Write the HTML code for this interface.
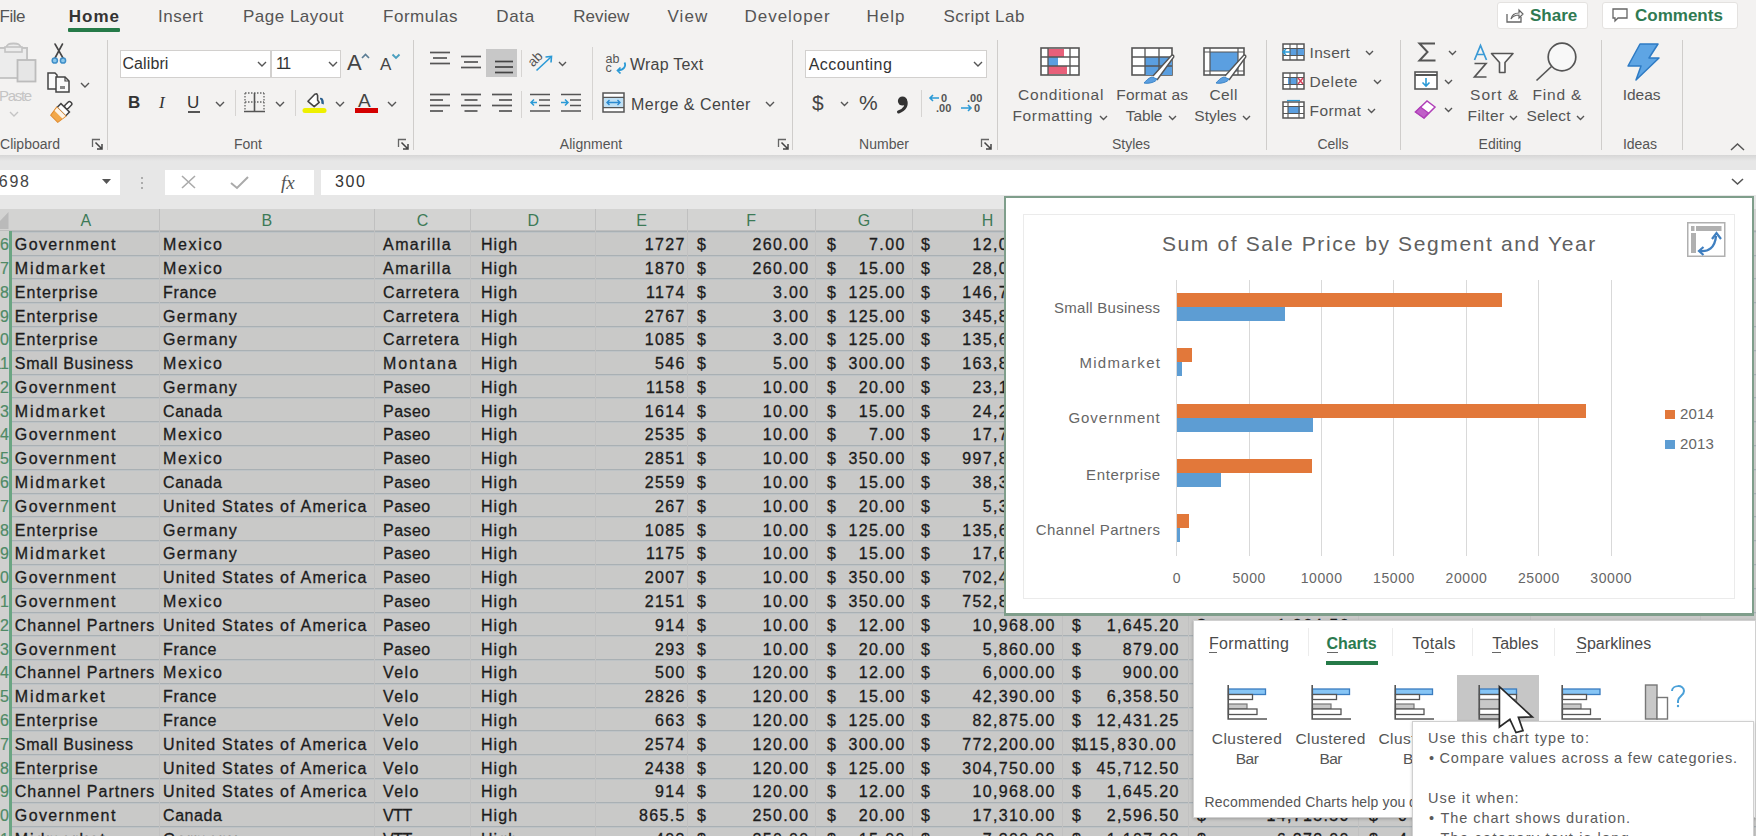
<!DOCTYPE html><html><head><meta charset="utf-8"><style>

*{box-sizing:border-box}
html,body{margin:0;padding:0}
body{width:1756px;height:836px;overflow:hidden;position:relative;background:#c9c9c8;font-family:"Liberation Sans",sans-serif;color:#222}
.a{position:absolute;white-space:nowrap}
.t{position:absolute;white-space:nowrap;line-height:1}
svg{position:absolute;overflow:visible}

</style></head><body>
<div class="a" style="left:0;top:209px;width:1756px;height:627px;background:#c9c9c8"></div>
<div class="a" style="left:0;top:209px;width:1756px;height:22px;background:#d3d3d2;border-bottom:1px solid #bdbdbd"></div>
<svg style="left:0;top:209px" width="10" height="22"><path d="M8.5 3 L8.5 20 L0 20 L0 12 Z" fill="#bababa"/></svg>
<div class="a" style="left:159.0px;top:209px;width:1px;height:22px;background:#c0c0c0"></div>
<div class="t" style="left:12.0px;width:147.5px;top:213px;text-align:center;font-size:16px;color:#3d7a57">A</div>
<div class="a" style="left:373.9px;top:209px;width:1px;height:22px;background:#c0c0c0"></div>
<div class="t" style="left:159.5px;width:214.9px;top:213px;text-align:center;font-size:16px;color:#3d7a57">B</div>
<div class="a" style="left:470.2px;top:209px;width:1px;height:22px;background:#c0c0c0"></div>
<div class="t" style="left:374.4px;width:96.3px;top:213px;text-align:center;font-size:16px;color:#3d7a57">C</div>
<div class="a" style="left:595.3px;top:209px;width:1px;height:22px;background:#c0c0c0"></div>
<div class="t" style="left:470.7px;width:125.1px;top:213px;text-align:center;font-size:16px;color:#3d7a57">D</div>
<div class="a" style="left:686.7px;top:209px;width:1px;height:22px;background:#c0c0c0"></div>
<div class="t" style="left:595.8px;width:91.4px;top:213px;text-align:center;font-size:16px;color:#3d7a57">E</div>
<div class="a" style="left:814.8px;top:209px;width:1px;height:22px;background:#c0c0c0"></div>
<div class="t" style="left:687.2px;width:128.1px;top:213px;text-align:center;font-size:16px;color:#3d7a57">F</div>
<div class="a" style="left:912.2px;top:209px;width:1px;height:22px;background:#c0c0c0"></div>
<div class="t" style="left:815.3px;width:97.4px;top:213px;text-align:center;font-size:16px;color:#3d7a57">G</div>
<div class="a" style="left:1062.0px;top:209px;width:1px;height:22px;background:#c0c0c0"></div>
<div class="t" style="left:912.7px;width:149.8px;top:213px;text-align:center;font-size:16px;color:#3d7a57">H</div>
<div class="a" style="left:1187.9px;top:209px;width:1px;height:22px;background:#c0c0c0"></div>
<div class="t" style="left:1062.5px;width:125.9px;top:213px;text-align:center;font-size:16px;color:#3d7a57">I</div>
<div class="a" style="left:1357.5px;top:209px;width:1px;height:22px;background:#c0c0c0"></div>
<div class="t" style="left:1188.4px;width:169.6px;top:213px;text-align:center;font-size:16px;color:#3d7a57">J</div>
<div class="a" style="left:1529.5px;top:209px;width:1px;height:22px;background:#c0c0c0"></div>
<div class="t" style="left:1358.0px;width:172.0px;top:213px;text-align:center;font-size:16px;color:#3d7a57">K</div>
<div class="a" style="left:1699.5px;top:209px;width:1px;height:22px;background:#c0c0c0"></div>
<div class="t" style="left:1530.0px;width:170.0px;top:213px;text-align:center;font-size:16px;color:#3d7a57">L</div>
<div class="a" style="left:12px;top:230.90px;width:1744px;height:1px;background:#a9b0b4"></div>
<div class="a" style="left:12px;top:231.90px;width:1744px;height:1px;background:#bec3c6"></div>
<div class="a" style="left:12px;top:254.69px;width:1744px;height:1px;background:#a9b0b4"></div>
<div class="a" style="left:12px;top:255.69px;width:1744px;height:1px;background:#bec3c6"></div>
<div class="a" style="left:12px;top:278.48px;width:1744px;height:1px;background:#a9b0b4"></div>
<div class="a" style="left:12px;top:279.48px;width:1744px;height:1px;background:#bec3c6"></div>
<div class="a" style="left:12px;top:302.27px;width:1744px;height:1px;background:#a9b0b4"></div>
<div class="a" style="left:12px;top:303.27px;width:1744px;height:1px;background:#bec3c6"></div>
<div class="a" style="left:12px;top:326.06px;width:1744px;height:1px;background:#a9b0b4"></div>
<div class="a" style="left:12px;top:327.06px;width:1744px;height:1px;background:#bec3c6"></div>
<div class="a" style="left:12px;top:349.85px;width:1744px;height:1px;background:#a9b0b4"></div>
<div class="a" style="left:12px;top:350.85px;width:1744px;height:1px;background:#bec3c6"></div>
<div class="a" style="left:12px;top:373.64px;width:1744px;height:1px;background:#a9b0b4"></div>
<div class="a" style="left:12px;top:374.64px;width:1744px;height:1px;background:#bec3c6"></div>
<div class="a" style="left:12px;top:397.43px;width:1744px;height:1px;background:#a9b0b4"></div>
<div class="a" style="left:12px;top:398.43px;width:1744px;height:1px;background:#bec3c6"></div>
<div class="a" style="left:12px;top:421.22px;width:1744px;height:1px;background:#a9b0b4"></div>
<div class="a" style="left:12px;top:422.22px;width:1744px;height:1px;background:#bec3c6"></div>
<div class="a" style="left:12px;top:445.01px;width:1744px;height:1px;background:#a9b0b4"></div>
<div class="a" style="left:12px;top:446.01px;width:1744px;height:1px;background:#bec3c6"></div>
<div class="a" style="left:12px;top:468.80px;width:1744px;height:1px;background:#a9b0b4"></div>
<div class="a" style="left:12px;top:469.80px;width:1744px;height:1px;background:#bec3c6"></div>
<div class="a" style="left:12px;top:492.59px;width:1744px;height:1px;background:#a9b0b4"></div>
<div class="a" style="left:12px;top:493.59px;width:1744px;height:1px;background:#bec3c6"></div>
<div class="a" style="left:12px;top:516.38px;width:1744px;height:1px;background:#a9b0b4"></div>
<div class="a" style="left:12px;top:517.38px;width:1744px;height:1px;background:#bec3c6"></div>
<div class="a" style="left:12px;top:540.17px;width:1744px;height:1px;background:#a9b0b4"></div>
<div class="a" style="left:12px;top:541.17px;width:1744px;height:1px;background:#bec3c6"></div>
<div class="a" style="left:12px;top:563.96px;width:1744px;height:1px;background:#a9b0b4"></div>
<div class="a" style="left:12px;top:564.96px;width:1744px;height:1px;background:#bec3c6"></div>
<div class="a" style="left:12px;top:587.75px;width:1744px;height:1px;background:#a9b0b4"></div>
<div class="a" style="left:12px;top:588.75px;width:1744px;height:1px;background:#bec3c6"></div>
<div class="a" style="left:12px;top:611.54px;width:1744px;height:1px;background:#a9b0b4"></div>
<div class="a" style="left:12px;top:612.54px;width:1744px;height:1px;background:#bec3c6"></div>
<div class="a" style="left:12px;top:635.33px;width:1744px;height:1px;background:#a9b0b4"></div>
<div class="a" style="left:12px;top:636.33px;width:1744px;height:1px;background:#bec3c6"></div>
<div class="a" style="left:12px;top:659.12px;width:1744px;height:1px;background:#a9b0b4"></div>
<div class="a" style="left:12px;top:660.12px;width:1744px;height:1px;background:#bec3c6"></div>
<div class="a" style="left:12px;top:682.91px;width:1744px;height:1px;background:#a9b0b4"></div>
<div class="a" style="left:12px;top:683.91px;width:1744px;height:1px;background:#bec3c6"></div>
<div class="a" style="left:12px;top:706.70px;width:1744px;height:1px;background:#a9b0b4"></div>
<div class="a" style="left:12px;top:707.70px;width:1744px;height:1px;background:#bec3c6"></div>
<div class="a" style="left:12px;top:730.49px;width:1744px;height:1px;background:#a9b0b4"></div>
<div class="a" style="left:12px;top:731.49px;width:1744px;height:1px;background:#bec3c6"></div>
<div class="a" style="left:12px;top:754.28px;width:1744px;height:1px;background:#a9b0b4"></div>
<div class="a" style="left:12px;top:755.28px;width:1744px;height:1px;background:#bec3c6"></div>
<div class="a" style="left:12px;top:778.07px;width:1744px;height:1px;background:#a9b0b4"></div>
<div class="a" style="left:12px;top:779.07px;width:1744px;height:1px;background:#bec3c6"></div>
<div class="a" style="left:12px;top:801.86px;width:1744px;height:1px;background:#a9b0b4"></div>
<div class="a" style="left:12px;top:802.86px;width:1744px;height:1px;background:#bec3c6"></div>
<div class="a" style="left:12px;top:825.65px;width:1744px;height:1px;background:#a9b0b4"></div>
<div class="a" style="left:12px;top:826.65px;width:1744px;height:1px;background:#bec3c6"></div>
<div class="a" style="left:12px;top:849.44px;width:1744px;height:1px;background:#a9b0b4"></div>
<div class="a" style="left:12px;top:850.44px;width:1744px;height:1px;background:#bec3c6"></div>
<div class="a" style="left:159.0px;top:231px;width:1px;height:605px;background:#c1c1c1"></div>
<div class="a" style="left:373.9px;top:231px;width:1px;height:605px;background:#c1c1c1"></div>
<div class="a" style="left:470.2px;top:231px;width:1px;height:605px;background:#c1c1c1"></div>
<div class="a" style="left:595.3px;top:231px;width:1px;height:605px;background:#c1c1c1"></div>
<div class="a" style="left:686.7px;top:231px;width:1px;height:605px;background:#c1c1c1"></div>
<div class="a" style="left:814.8px;top:231px;width:1px;height:605px;background:#c1c1c1"></div>
<div class="a" style="left:912.2px;top:231px;width:1px;height:605px;background:#c1c1c1"></div>
<div class="a" style="left:1062.0px;top:231px;width:1px;height:605px;background:#c1c1c1"></div>
<div class="a" style="left:1187.9px;top:231px;width:1px;height:605px;background:#c1c1c1"></div>
<div class="a" style="left:1357.5px;top:231px;width:1px;height:605px;background:#c1c1c1"></div>
<div class="a" style="left:1529.5px;top:231px;width:1px;height:605px;background:#c1c1c1"></div>
<div class="a" style="left:1699.5px;top:231px;width:1px;height:605px;background:#c1c1c1"></div>
<div class="a" style="left:0;top:231px;width:10px;height:605px;background:#d0d0cf"></div>
<div class="a" style="left:9px;top:231px;width:3px;height:605px;background:#6aa582"></div>
<div class="t" style="right:1747px;top:237.16px;font-size:16px;color:#4f8a66;-webkit-text-stroke:0.2px #4f8a66">6</div>
<div class="t" style="left:14.8px;top:237.16px;font-size:16px;color:#1c1c1c;letter-spacing:1.39px;-webkit-text-stroke:0.3px #1c1c1c">Government</div>
<div class="t" style="left:163.1px;top:237.16px;font-size:16px;color:#1c1c1c;letter-spacing:1.63px;-webkit-text-stroke:0.3px #1c1c1c">Mexico</div>
<div class="t" style="left:383.1px;top:237.16px;font-size:16px;color:#1c1c1c;letter-spacing:1.39px;-webkit-text-stroke:0.3px #1c1c1c">Amarilla</div>
<div class="t" style="left:480.9px;top:237.16px;font-size:16px;color:#1c1c1c;letter-spacing:1.13px;-webkit-text-stroke:0.3px #1c1c1c">High</div>
<div class="t" style="right:1070.15px;top:237.16px;font-size:16px;letter-spacing:1.35px;color:#1c1c1c;-webkit-text-stroke:0.3px #1c1c1c">1727</div>
<div class="t" style="left:697px;top:237.16px;font-size:16px;color:#1c1c1c;-webkit-text-stroke:0.3px #1c1c1c">$</div>
<div class="t" style="right:946.55px;top:237.16px;font-size:16px;letter-spacing:1.35px;color:#1c1c1c;-webkit-text-stroke:0.3px #1c1c1c">260.00</div>
<div class="t" style="left:827px;top:237.16px;font-size:16px;color:#1c1c1c;-webkit-text-stroke:0.3px #1c1c1c">$</div>
<div class="t" style="right:850.35px;top:237.16px;font-size:16px;letter-spacing:1.35px;color:#1c1c1c;-webkit-text-stroke:0.3px #1c1c1c">7.00</div>
<div class="t" style="left:921px;top:237.16px;font-size:16px;color:#1c1c1c;-webkit-text-stroke:0.3px #1c1c1c">$</div>
<div class="t" style="right:700.15px;top:237.16px;font-size:16px;letter-spacing:1.35px;color:#1c1c1c;-webkit-text-stroke:0.3px #1c1c1c">12,089.00</div>
<div class="t" style="right:1747px;top:260.95px;font-size:16px;color:#4f8a66;-webkit-text-stroke:0.2px #4f8a66">7</div>
<div class="t" style="left:14.8px;top:260.95px;font-size:16px;color:#1c1c1c;letter-spacing:1.91px;-webkit-text-stroke:0.3px #1c1c1c">Midmarket</div>
<div class="t" style="left:163.1px;top:260.95px;font-size:16px;color:#1c1c1c;letter-spacing:1.63px;-webkit-text-stroke:0.3px #1c1c1c">Mexico</div>
<div class="t" style="left:383.1px;top:260.95px;font-size:16px;color:#1c1c1c;letter-spacing:1.39px;-webkit-text-stroke:0.3px #1c1c1c">Amarilla</div>
<div class="t" style="left:480.9px;top:260.95px;font-size:16px;color:#1c1c1c;letter-spacing:1.13px;-webkit-text-stroke:0.3px #1c1c1c">High</div>
<div class="t" style="right:1070.15px;top:260.95px;font-size:16px;letter-spacing:1.35px;color:#1c1c1c;-webkit-text-stroke:0.3px #1c1c1c">1870</div>
<div class="t" style="left:697px;top:260.95px;font-size:16px;color:#1c1c1c;-webkit-text-stroke:0.3px #1c1c1c">$</div>
<div class="t" style="right:946.55px;top:260.95px;font-size:16px;letter-spacing:1.35px;color:#1c1c1c;-webkit-text-stroke:0.3px #1c1c1c">260.00</div>
<div class="t" style="left:827px;top:260.95px;font-size:16px;color:#1c1c1c;-webkit-text-stroke:0.3px #1c1c1c">$</div>
<div class="t" style="right:850.35px;top:260.95px;font-size:16px;letter-spacing:1.35px;color:#1c1c1c;-webkit-text-stroke:0.3px #1c1c1c">15.00</div>
<div class="t" style="left:921px;top:260.95px;font-size:16px;color:#1c1c1c;-webkit-text-stroke:0.3px #1c1c1c">$</div>
<div class="t" style="right:700.15px;top:260.95px;font-size:16px;letter-spacing:1.35px;color:#1c1c1c;-webkit-text-stroke:0.3px #1c1c1c">28,050.00</div>
<div class="t" style="right:1747px;top:284.74px;font-size:16px;color:#4f8a66;-webkit-text-stroke:0.2px #4f8a66">8</div>
<div class="t" style="left:14.8px;top:284.74px;font-size:16px;color:#1c1c1c;letter-spacing:1.10px;-webkit-text-stroke:0.3px #1c1c1c">Enterprise</div>
<div class="t" style="left:163.1px;top:284.74px;font-size:16px;color:#1c1c1c;letter-spacing:0.69px;-webkit-text-stroke:0.3px #1c1c1c">France</div>
<div class="t" style="left:383.1px;top:284.74px;font-size:16px;color:#1c1c1c;letter-spacing:1.03px;-webkit-text-stroke:0.3px #1c1c1c">Carretera</div>
<div class="t" style="left:480.9px;top:284.74px;font-size:16px;color:#1c1c1c;letter-spacing:1.13px;-webkit-text-stroke:0.3px #1c1c1c">High</div>
<div class="t" style="right:1070.15px;top:284.74px;font-size:16px;letter-spacing:1.35px;color:#1c1c1c;-webkit-text-stroke:0.3px #1c1c1c">1174</div>
<div class="t" style="left:697px;top:284.74px;font-size:16px;color:#1c1c1c;-webkit-text-stroke:0.3px #1c1c1c">$</div>
<div class="t" style="right:946.55px;top:284.74px;font-size:16px;letter-spacing:1.35px;color:#1c1c1c;-webkit-text-stroke:0.3px #1c1c1c">3.00</div>
<div class="t" style="left:827px;top:284.74px;font-size:16px;color:#1c1c1c;-webkit-text-stroke:0.3px #1c1c1c">$</div>
<div class="t" style="right:850.35px;top:284.74px;font-size:16px;letter-spacing:1.35px;color:#1c1c1c;-webkit-text-stroke:0.3px #1c1c1c">125.00</div>
<div class="t" style="left:921px;top:284.74px;font-size:16px;color:#1c1c1c;-webkit-text-stroke:0.3px #1c1c1c">$</div>
<div class="t" style="right:700.15px;top:284.74px;font-size:16px;letter-spacing:1.35px;color:#1c1c1c;-webkit-text-stroke:0.3px #1c1c1c">146,750.00</div>
<div class="t" style="right:1747px;top:308.53px;font-size:16px;color:#4f8a66;-webkit-text-stroke:0.2px #4f8a66">9</div>
<div class="t" style="left:14.8px;top:308.53px;font-size:16px;color:#1c1c1c;letter-spacing:1.10px;-webkit-text-stroke:0.3px #1c1c1c">Enterprise</div>
<div class="t" style="left:163.1px;top:308.53px;font-size:16px;color:#1c1c1c;letter-spacing:1.33px;-webkit-text-stroke:0.3px #1c1c1c">Germany</div>
<div class="t" style="left:383.1px;top:308.53px;font-size:16px;color:#1c1c1c;letter-spacing:1.03px;-webkit-text-stroke:0.3px #1c1c1c">Carretera</div>
<div class="t" style="left:480.9px;top:308.53px;font-size:16px;color:#1c1c1c;letter-spacing:1.13px;-webkit-text-stroke:0.3px #1c1c1c">High</div>
<div class="t" style="right:1070.15px;top:308.53px;font-size:16px;letter-spacing:1.35px;color:#1c1c1c;-webkit-text-stroke:0.3px #1c1c1c">2767</div>
<div class="t" style="left:697px;top:308.53px;font-size:16px;color:#1c1c1c;-webkit-text-stroke:0.3px #1c1c1c">$</div>
<div class="t" style="right:946.55px;top:308.53px;font-size:16px;letter-spacing:1.35px;color:#1c1c1c;-webkit-text-stroke:0.3px #1c1c1c">3.00</div>
<div class="t" style="left:827px;top:308.53px;font-size:16px;color:#1c1c1c;-webkit-text-stroke:0.3px #1c1c1c">$</div>
<div class="t" style="right:850.35px;top:308.53px;font-size:16px;letter-spacing:1.35px;color:#1c1c1c;-webkit-text-stroke:0.3px #1c1c1c">125.00</div>
<div class="t" style="left:921px;top:308.53px;font-size:16px;color:#1c1c1c;-webkit-text-stroke:0.3px #1c1c1c">$</div>
<div class="t" style="right:700.15px;top:308.53px;font-size:16px;letter-spacing:1.35px;color:#1c1c1c;-webkit-text-stroke:0.3px #1c1c1c">345,875.00</div>
<div class="t" style="right:1747px;top:332.32px;font-size:16px;color:#4f8a66;-webkit-text-stroke:0.2px #4f8a66">10</div>
<div class="t" style="left:14.8px;top:332.32px;font-size:16px;color:#1c1c1c;letter-spacing:1.10px;-webkit-text-stroke:0.3px #1c1c1c">Enterprise</div>
<div class="t" style="left:163.1px;top:332.32px;font-size:16px;color:#1c1c1c;letter-spacing:1.33px;-webkit-text-stroke:0.3px #1c1c1c">Germany</div>
<div class="t" style="left:383.1px;top:332.32px;font-size:16px;color:#1c1c1c;letter-spacing:1.03px;-webkit-text-stroke:0.3px #1c1c1c">Carretera</div>
<div class="t" style="left:480.9px;top:332.32px;font-size:16px;color:#1c1c1c;letter-spacing:1.13px;-webkit-text-stroke:0.3px #1c1c1c">High</div>
<div class="t" style="right:1070.15px;top:332.32px;font-size:16px;letter-spacing:1.35px;color:#1c1c1c;-webkit-text-stroke:0.3px #1c1c1c">1085</div>
<div class="t" style="left:697px;top:332.32px;font-size:16px;color:#1c1c1c;-webkit-text-stroke:0.3px #1c1c1c">$</div>
<div class="t" style="right:946.55px;top:332.32px;font-size:16px;letter-spacing:1.35px;color:#1c1c1c;-webkit-text-stroke:0.3px #1c1c1c">3.00</div>
<div class="t" style="left:827px;top:332.32px;font-size:16px;color:#1c1c1c;-webkit-text-stroke:0.3px #1c1c1c">$</div>
<div class="t" style="right:850.35px;top:332.32px;font-size:16px;letter-spacing:1.35px;color:#1c1c1c;-webkit-text-stroke:0.3px #1c1c1c">125.00</div>
<div class="t" style="left:921px;top:332.32px;font-size:16px;color:#1c1c1c;-webkit-text-stroke:0.3px #1c1c1c">$</div>
<div class="t" style="right:700.15px;top:332.32px;font-size:16px;letter-spacing:1.35px;color:#1c1c1c;-webkit-text-stroke:0.3px #1c1c1c">135,625.00</div>
<div class="t" style="right:1747px;top:356.11px;font-size:16px;color:#4f8a66;-webkit-text-stroke:0.2px #4f8a66">11</div>
<div class="t" style="left:14.8px;top:356.11px;font-size:16px;color:#1c1c1c;letter-spacing:0.67px;-webkit-text-stroke:0.3px #1c1c1c">Small Business</div>
<div class="t" style="left:163.1px;top:356.11px;font-size:16px;color:#1c1c1c;letter-spacing:1.63px;-webkit-text-stroke:0.3px #1c1c1c">Mexico</div>
<div class="t" style="left:383.1px;top:356.11px;font-size:16px;color:#1c1c1c;letter-spacing:1.88px;-webkit-text-stroke:0.3px #1c1c1c">Montana</div>
<div class="t" style="left:480.9px;top:356.11px;font-size:16px;color:#1c1c1c;letter-spacing:1.13px;-webkit-text-stroke:0.3px #1c1c1c">High</div>
<div class="t" style="right:1070.15px;top:356.11px;font-size:16px;letter-spacing:1.35px;color:#1c1c1c;-webkit-text-stroke:0.3px #1c1c1c">546</div>
<div class="t" style="left:697px;top:356.11px;font-size:16px;color:#1c1c1c;-webkit-text-stroke:0.3px #1c1c1c">$</div>
<div class="t" style="right:946.55px;top:356.11px;font-size:16px;letter-spacing:1.35px;color:#1c1c1c;-webkit-text-stroke:0.3px #1c1c1c">5.00</div>
<div class="t" style="left:827px;top:356.11px;font-size:16px;color:#1c1c1c;-webkit-text-stroke:0.3px #1c1c1c">$</div>
<div class="t" style="right:850.35px;top:356.11px;font-size:16px;letter-spacing:1.35px;color:#1c1c1c;-webkit-text-stroke:0.3px #1c1c1c">300.00</div>
<div class="t" style="left:921px;top:356.11px;font-size:16px;color:#1c1c1c;-webkit-text-stroke:0.3px #1c1c1c">$</div>
<div class="t" style="right:700.15px;top:356.11px;font-size:16px;letter-spacing:1.35px;color:#1c1c1c;-webkit-text-stroke:0.3px #1c1c1c">163,800.00</div>
<div class="t" style="right:1747px;top:379.90px;font-size:16px;color:#4f8a66;-webkit-text-stroke:0.2px #4f8a66">12</div>
<div class="t" style="left:14.8px;top:379.9px;font-size:16px;color:#1c1c1c;letter-spacing:1.39px;-webkit-text-stroke:0.3px #1c1c1c">Government</div>
<div class="t" style="left:163.1px;top:379.9px;font-size:16px;color:#1c1c1c;letter-spacing:1.33px;-webkit-text-stroke:0.3px #1c1c1c">Germany</div>
<div class="t" style="left:383.1px;top:379.9px;font-size:16px;color:#1c1c1c;letter-spacing:0.44px;-webkit-text-stroke:0.3px #1c1c1c">Paseo</div>
<div class="t" style="left:480.9px;top:379.9px;font-size:16px;color:#1c1c1c;letter-spacing:1.13px;-webkit-text-stroke:0.3px #1c1c1c">High</div>
<div class="t" style="right:1070.15px;top:379.90px;font-size:16px;letter-spacing:1.35px;color:#1c1c1c;-webkit-text-stroke:0.3px #1c1c1c">1158</div>
<div class="t" style="left:697px;top:379.90px;font-size:16px;color:#1c1c1c;-webkit-text-stroke:0.3px #1c1c1c">$</div>
<div class="t" style="right:946.55px;top:379.90px;font-size:16px;letter-spacing:1.35px;color:#1c1c1c;-webkit-text-stroke:0.3px #1c1c1c">10.00</div>
<div class="t" style="left:827px;top:379.90px;font-size:16px;color:#1c1c1c;-webkit-text-stroke:0.3px #1c1c1c">$</div>
<div class="t" style="right:850.35px;top:379.90px;font-size:16px;letter-spacing:1.35px;color:#1c1c1c;-webkit-text-stroke:0.3px #1c1c1c">20.00</div>
<div class="t" style="left:921px;top:379.90px;font-size:16px;color:#1c1c1c;-webkit-text-stroke:0.3px #1c1c1c">$</div>
<div class="t" style="right:700.15px;top:379.90px;font-size:16px;letter-spacing:1.35px;color:#1c1c1c;-webkit-text-stroke:0.3px #1c1c1c">23,160.00</div>
<div class="t" style="right:1747px;top:403.69px;font-size:16px;color:#4f8a66;-webkit-text-stroke:0.2px #4f8a66">13</div>
<div class="t" style="left:14.8px;top:403.69px;font-size:16px;color:#1c1c1c;letter-spacing:1.91px;-webkit-text-stroke:0.3px #1c1c1c">Midmarket</div>
<div class="t" style="left:163.1px;top:403.69px;font-size:16px;color:#1c1c1c;letter-spacing:0.53px;-webkit-text-stroke:0.3px #1c1c1c">Canada</div>
<div class="t" style="left:383.1px;top:403.69px;font-size:16px;color:#1c1c1c;letter-spacing:0.44px;-webkit-text-stroke:0.3px #1c1c1c">Paseo</div>
<div class="t" style="left:480.9px;top:403.69px;font-size:16px;color:#1c1c1c;letter-spacing:1.13px;-webkit-text-stroke:0.3px #1c1c1c">High</div>
<div class="t" style="right:1070.15px;top:403.69px;font-size:16px;letter-spacing:1.35px;color:#1c1c1c;-webkit-text-stroke:0.3px #1c1c1c">1614</div>
<div class="t" style="left:697px;top:403.69px;font-size:16px;color:#1c1c1c;-webkit-text-stroke:0.3px #1c1c1c">$</div>
<div class="t" style="right:946.55px;top:403.69px;font-size:16px;letter-spacing:1.35px;color:#1c1c1c;-webkit-text-stroke:0.3px #1c1c1c">10.00</div>
<div class="t" style="left:827px;top:403.69px;font-size:16px;color:#1c1c1c;-webkit-text-stroke:0.3px #1c1c1c">$</div>
<div class="t" style="right:850.35px;top:403.69px;font-size:16px;letter-spacing:1.35px;color:#1c1c1c;-webkit-text-stroke:0.3px #1c1c1c">15.00</div>
<div class="t" style="left:921px;top:403.69px;font-size:16px;color:#1c1c1c;-webkit-text-stroke:0.3px #1c1c1c">$</div>
<div class="t" style="right:700.15px;top:403.69px;font-size:16px;letter-spacing:1.35px;color:#1c1c1c;-webkit-text-stroke:0.3px #1c1c1c">24,210.00</div>
<div class="t" style="right:1747px;top:427.48px;font-size:16px;color:#4f8a66;-webkit-text-stroke:0.2px #4f8a66">14</div>
<div class="t" style="left:14.8px;top:427.48px;font-size:16px;color:#1c1c1c;letter-spacing:1.39px;-webkit-text-stroke:0.3px #1c1c1c">Government</div>
<div class="t" style="left:163.1px;top:427.48px;font-size:16px;color:#1c1c1c;letter-spacing:1.63px;-webkit-text-stroke:0.3px #1c1c1c">Mexico</div>
<div class="t" style="left:383.1px;top:427.48px;font-size:16px;color:#1c1c1c;letter-spacing:0.44px;-webkit-text-stroke:0.3px #1c1c1c">Paseo</div>
<div class="t" style="left:480.9px;top:427.48px;font-size:16px;color:#1c1c1c;letter-spacing:1.13px;-webkit-text-stroke:0.3px #1c1c1c">High</div>
<div class="t" style="right:1070.15px;top:427.48px;font-size:16px;letter-spacing:1.35px;color:#1c1c1c;-webkit-text-stroke:0.3px #1c1c1c">2535</div>
<div class="t" style="left:697px;top:427.48px;font-size:16px;color:#1c1c1c;-webkit-text-stroke:0.3px #1c1c1c">$</div>
<div class="t" style="right:946.55px;top:427.48px;font-size:16px;letter-spacing:1.35px;color:#1c1c1c;-webkit-text-stroke:0.3px #1c1c1c">10.00</div>
<div class="t" style="left:827px;top:427.48px;font-size:16px;color:#1c1c1c;-webkit-text-stroke:0.3px #1c1c1c">$</div>
<div class="t" style="right:850.35px;top:427.48px;font-size:16px;letter-spacing:1.35px;color:#1c1c1c;-webkit-text-stroke:0.3px #1c1c1c">7.00</div>
<div class="t" style="left:921px;top:427.48px;font-size:16px;color:#1c1c1c;-webkit-text-stroke:0.3px #1c1c1c">$</div>
<div class="t" style="right:700.15px;top:427.48px;font-size:16px;letter-spacing:1.35px;color:#1c1c1c;-webkit-text-stroke:0.3px #1c1c1c">17,745.00</div>
<div class="t" style="right:1747px;top:451.27px;font-size:16px;color:#4f8a66;-webkit-text-stroke:0.2px #4f8a66">15</div>
<div class="t" style="left:14.8px;top:451.27px;font-size:16px;color:#1c1c1c;letter-spacing:1.39px;-webkit-text-stroke:0.3px #1c1c1c">Government</div>
<div class="t" style="left:163.1px;top:451.27px;font-size:16px;color:#1c1c1c;letter-spacing:1.63px;-webkit-text-stroke:0.3px #1c1c1c">Mexico</div>
<div class="t" style="left:383.1px;top:451.27px;font-size:16px;color:#1c1c1c;letter-spacing:0.44px;-webkit-text-stroke:0.3px #1c1c1c">Paseo</div>
<div class="t" style="left:480.9px;top:451.27px;font-size:16px;color:#1c1c1c;letter-spacing:1.13px;-webkit-text-stroke:0.3px #1c1c1c">High</div>
<div class="t" style="right:1070.15px;top:451.27px;font-size:16px;letter-spacing:1.35px;color:#1c1c1c;-webkit-text-stroke:0.3px #1c1c1c">2851</div>
<div class="t" style="left:697px;top:451.27px;font-size:16px;color:#1c1c1c;-webkit-text-stroke:0.3px #1c1c1c">$</div>
<div class="t" style="right:946.55px;top:451.27px;font-size:16px;letter-spacing:1.35px;color:#1c1c1c;-webkit-text-stroke:0.3px #1c1c1c">10.00</div>
<div class="t" style="left:827px;top:451.27px;font-size:16px;color:#1c1c1c;-webkit-text-stroke:0.3px #1c1c1c">$</div>
<div class="t" style="right:850.35px;top:451.27px;font-size:16px;letter-spacing:1.35px;color:#1c1c1c;-webkit-text-stroke:0.3px #1c1c1c">350.00</div>
<div class="t" style="left:921px;top:451.27px;font-size:16px;color:#1c1c1c;-webkit-text-stroke:0.3px #1c1c1c">$</div>
<div class="t" style="right:700.15px;top:451.27px;font-size:16px;letter-spacing:1.35px;color:#1c1c1c;-webkit-text-stroke:0.3px #1c1c1c">997,850.00</div>
<div class="t" style="right:1747px;top:475.06px;font-size:16px;color:#4f8a66;-webkit-text-stroke:0.2px #4f8a66">16</div>
<div class="t" style="left:14.8px;top:475.06px;font-size:16px;color:#1c1c1c;letter-spacing:1.91px;-webkit-text-stroke:0.3px #1c1c1c">Midmarket</div>
<div class="t" style="left:163.1px;top:475.06px;font-size:16px;color:#1c1c1c;letter-spacing:0.53px;-webkit-text-stroke:0.3px #1c1c1c">Canada</div>
<div class="t" style="left:383.1px;top:475.06px;font-size:16px;color:#1c1c1c;letter-spacing:0.44px;-webkit-text-stroke:0.3px #1c1c1c">Paseo</div>
<div class="t" style="left:480.9px;top:475.06px;font-size:16px;color:#1c1c1c;letter-spacing:1.13px;-webkit-text-stroke:0.3px #1c1c1c">High</div>
<div class="t" style="right:1070.15px;top:475.06px;font-size:16px;letter-spacing:1.35px;color:#1c1c1c;-webkit-text-stroke:0.3px #1c1c1c">2559</div>
<div class="t" style="left:697px;top:475.06px;font-size:16px;color:#1c1c1c;-webkit-text-stroke:0.3px #1c1c1c">$</div>
<div class="t" style="right:946.55px;top:475.06px;font-size:16px;letter-spacing:1.35px;color:#1c1c1c;-webkit-text-stroke:0.3px #1c1c1c">10.00</div>
<div class="t" style="left:827px;top:475.06px;font-size:16px;color:#1c1c1c;-webkit-text-stroke:0.3px #1c1c1c">$</div>
<div class="t" style="right:850.35px;top:475.06px;font-size:16px;letter-spacing:1.35px;color:#1c1c1c;-webkit-text-stroke:0.3px #1c1c1c">15.00</div>
<div class="t" style="left:921px;top:475.06px;font-size:16px;color:#1c1c1c;-webkit-text-stroke:0.3px #1c1c1c">$</div>
<div class="t" style="right:700.15px;top:475.06px;font-size:16px;letter-spacing:1.35px;color:#1c1c1c;-webkit-text-stroke:0.3px #1c1c1c">38,385.00</div>
<div class="t" style="right:1747px;top:498.85px;font-size:16px;color:#4f8a66;-webkit-text-stroke:0.2px #4f8a66">17</div>
<div class="t" style="left:14.8px;top:498.85px;font-size:16px;color:#1c1c1c;letter-spacing:1.39px;-webkit-text-stroke:0.3px #1c1c1c">Government</div>
<div class="t" style="left:163.1px;top:498.85px;font-size:16px;color:#1c1c1c;letter-spacing:1.18px;-webkit-text-stroke:0.3px #1c1c1c">United States of America</div>
<div class="t" style="left:383.1px;top:498.85px;font-size:16px;color:#1c1c1c;letter-spacing:0.44px;-webkit-text-stroke:0.3px #1c1c1c">Paseo</div>
<div class="t" style="left:480.9px;top:498.85px;font-size:16px;color:#1c1c1c;letter-spacing:1.13px;-webkit-text-stroke:0.3px #1c1c1c">High</div>
<div class="t" style="right:1070.15px;top:498.85px;font-size:16px;letter-spacing:1.35px;color:#1c1c1c;-webkit-text-stroke:0.3px #1c1c1c">267</div>
<div class="t" style="left:697px;top:498.85px;font-size:16px;color:#1c1c1c;-webkit-text-stroke:0.3px #1c1c1c">$</div>
<div class="t" style="right:946.55px;top:498.85px;font-size:16px;letter-spacing:1.35px;color:#1c1c1c;-webkit-text-stroke:0.3px #1c1c1c">10.00</div>
<div class="t" style="left:827px;top:498.85px;font-size:16px;color:#1c1c1c;-webkit-text-stroke:0.3px #1c1c1c">$</div>
<div class="t" style="right:850.35px;top:498.85px;font-size:16px;letter-spacing:1.35px;color:#1c1c1c;-webkit-text-stroke:0.3px #1c1c1c">20.00</div>
<div class="t" style="left:921px;top:498.85px;font-size:16px;color:#1c1c1c;-webkit-text-stroke:0.3px #1c1c1c">$</div>
<div class="t" style="right:700.15px;top:498.85px;font-size:16px;letter-spacing:1.35px;color:#1c1c1c;-webkit-text-stroke:0.3px #1c1c1c">5,340.00</div>
<div class="t" style="right:1747px;top:522.64px;font-size:16px;color:#4f8a66;-webkit-text-stroke:0.2px #4f8a66">18</div>
<div class="t" style="left:14.8px;top:522.64px;font-size:16px;color:#1c1c1c;letter-spacing:1.10px;-webkit-text-stroke:0.3px #1c1c1c">Enterprise</div>
<div class="t" style="left:163.1px;top:522.64px;font-size:16px;color:#1c1c1c;letter-spacing:1.33px;-webkit-text-stroke:0.3px #1c1c1c">Germany</div>
<div class="t" style="left:383.1px;top:522.64px;font-size:16px;color:#1c1c1c;letter-spacing:0.44px;-webkit-text-stroke:0.3px #1c1c1c">Paseo</div>
<div class="t" style="left:480.9px;top:522.64px;font-size:16px;color:#1c1c1c;letter-spacing:1.13px;-webkit-text-stroke:0.3px #1c1c1c">High</div>
<div class="t" style="right:1070.15px;top:522.64px;font-size:16px;letter-spacing:1.35px;color:#1c1c1c;-webkit-text-stroke:0.3px #1c1c1c">1085</div>
<div class="t" style="left:697px;top:522.64px;font-size:16px;color:#1c1c1c;-webkit-text-stroke:0.3px #1c1c1c">$</div>
<div class="t" style="right:946.55px;top:522.64px;font-size:16px;letter-spacing:1.35px;color:#1c1c1c;-webkit-text-stroke:0.3px #1c1c1c">10.00</div>
<div class="t" style="left:827px;top:522.64px;font-size:16px;color:#1c1c1c;-webkit-text-stroke:0.3px #1c1c1c">$</div>
<div class="t" style="right:850.35px;top:522.64px;font-size:16px;letter-spacing:1.35px;color:#1c1c1c;-webkit-text-stroke:0.3px #1c1c1c">125.00</div>
<div class="t" style="left:921px;top:522.64px;font-size:16px;color:#1c1c1c;-webkit-text-stroke:0.3px #1c1c1c">$</div>
<div class="t" style="right:700.15px;top:522.64px;font-size:16px;letter-spacing:1.35px;color:#1c1c1c;-webkit-text-stroke:0.3px #1c1c1c">135,625.00</div>
<div class="t" style="right:1747px;top:546.43px;font-size:16px;color:#4f8a66;-webkit-text-stroke:0.2px #4f8a66">19</div>
<div class="t" style="left:14.8px;top:546.43px;font-size:16px;color:#1c1c1c;letter-spacing:1.91px;-webkit-text-stroke:0.3px #1c1c1c">Midmarket</div>
<div class="t" style="left:163.1px;top:546.43px;font-size:16px;color:#1c1c1c;letter-spacing:1.33px;-webkit-text-stroke:0.3px #1c1c1c">Germany</div>
<div class="t" style="left:383.1px;top:546.43px;font-size:16px;color:#1c1c1c;letter-spacing:0.44px;-webkit-text-stroke:0.3px #1c1c1c">Paseo</div>
<div class="t" style="left:480.9px;top:546.43px;font-size:16px;color:#1c1c1c;letter-spacing:1.13px;-webkit-text-stroke:0.3px #1c1c1c">High</div>
<div class="t" style="right:1070.15px;top:546.43px;font-size:16px;letter-spacing:1.35px;color:#1c1c1c;-webkit-text-stroke:0.3px #1c1c1c">1175</div>
<div class="t" style="left:697px;top:546.43px;font-size:16px;color:#1c1c1c;-webkit-text-stroke:0.3px #1c1c1c">$</div>
<div class="t" style="right:946.55px;top:546.43px;font-size:16px;letter-spacing:1.35px;color:#1c1c1c;-webkit-text-stroke:0.3px #1c1c1c">10.00</div>
<div class="t" style="left:827px;top:546.43px;font-size:16px;color:#1c1c1c;-webkit-text-stroke:0.3px #1c1c1c">$</div>
<div class="t" style="right:850.35px;top:546.43px;font-size:16px;letter-spacing:1.35px;color:#1c1c1c;-webkit-text-stroke:0.3px #1c1c1c">15.00</div>
<div class="t" style="left:921px;top:546.43px;font-size:16px;color:#1c1c1c;-webkit-text-stroke:0.3px #1c1c1c">$</div>
<div class="t" style="right:700.15px;top:546.43px;font-size:16px;letter-spacing:1.35px;color:#1c1c1c;-webkit-text-stroke:0.3px #1c1c1c">17,625.00</div>
<div class="t" style="right:1747px;top:570.22px;font-size:16px;color:#4f8a66;-webkit-text-stroke:0.2px #4f8a66">20</div>
<div class="t" style="left:14.8px;top:570.22px;font-size:16px;color:#1c1c1c;letter-spacing:1.39px;-webkit-text-stroke:0.3px #1c1c1c">Government</div>
<div class="t" style="left:163.1px;top:570.22px;font-size:16px;color:#1c1c1c;letter-spacing:1.18px;-webkit-text-stroke:0.3px #1c1c1c">United States of America</div>
<div class="t" style="left:383.1px;top:570.22px;font-size:16px;color:#1c1c1c;letter-spacing:0.44px;-webkit-text-stroke:0.3px #1c1c1c">Paseo</div>
<div class="t" style="left:480.9px;top:570.22px;font-size:16px;color:#1c1c1c;letter-spacing:1.13px;-webkit-text-stroke:0.3px #1c1c1c">High</div>
<div class="t" style="right:1070.15px;top:570.22px;font-size:16px;letter-spacing:1.35px;color:#1c1c1c;-webkit-text-stroke:0.3px #1c1c1c">2007</div>
<div class="t" style="left:697px;top:570.22px;font-size:16px;color:#1c1c1c;-webkit-text-stroke:0.3px #1c1c1c">$</div>
<div class="t" style="right:946.55px;top:570.22px;font-size:16px;letter-spacing:1.35px;color:#1c1c1c;-webkit-text-stroke:0.3px #1c1c1c">10.00</div>
<div class="t" style="left:827px;top:570.22px;font-size:16px;color:#1c1c1c;-webkit-text-stroke:0.3px #1c1c1c">$</div>
<div class="t" style="right:850.35px;top:570.22px;font-size:16px;letter-spacing:1.35px;color:#1c1c1c;-webkit-text-stroke:0.3px #1c1c1c">350.00</div>
<div class="t" style="left:921px;top:570.22px;font-size:16px;color:#1c1c1c;-webkit-text-stroke:0.3px #1c1c1c">$</div>
<div class="t" style="right:700.15px;top:570.22px;font-size:16px;letter-spacing:1.35px;color:#1c1c1c;-webkit-text-stroke:0.3px #1c1c1c">702,450.00</div>
<div class="t" style="right:1747px;top:594.01px;font-size:16px;color:#4f8a66;-webkit-text-stroke:0.2px #4f8a66">21</div>
<div class="t" style="left:14.8px;top:594.01px;font-size:16px;color:#1c1c1c;letter-spacing:1.39px;-webkit-text-stroke:0.3px #1c1c1c">Government</div>
<div class="t" style="left:163.1px;top:594.01px;font-size:16px;color:#1c1c1c;letter-spacing:1.63px;-webkit-text-stroke:0.3px #1c1c1c">Mexico</div>
<div class="t" style="left:383.1px;top:594.01px;font-size:16px;color:#1c1c1c;letter-spacing:0.44px;-webkit-text-stroke:0.3px #1c1c1c">Paseo</div>
<div class="t" style="left:480.9px;top:594.01px;font-size:16px;color:#1c1c1c;letter-spacing:1.13px;-webkit-text-stroke:0.3px #1c1c1c">High</div>
<div class="t" style="right:1070.15px;top:594.01px;font-size:16px;letter-spacing:1.35px;color:#1c1c1c;-webkit-text-stroke:0.3px #1c1c1c">2151</div>
<div class="t" style="left:697px;top:594.01px;font-size:16px;color:#1c1c1c;-webkit-text-stroke:0.3px #1c1c1c">$</div>
<div class="t" style="right:946.55px;top:594.01px;font-size:16px;letter-spacing:1.35px;color:#1c1c1c;-webkit-text-stroke:0.3px #1c1c1c">10.00</div>
<div class="t" style="left:827px;top:594.01px;font-size:16px;color:#1c1c1c;-webkit-text-stroke:0.3px #1c1c1c">$</div>
<div class="t" style="right:850.35px;top:594.01px;font-size:16px;letter-spacing:1.35px;color:#1c1c1c;-webkit-text-stroke:0.3px #1c1c1c">350.00</div>
<div class="t" style="left:921px;top:594.01px;font-size:16px;color:#1c1c1c;-webkit-text-stroke:0.3px #1c1c1c">$</div>
<div class="t" style="right:700.15px;top:594.01px;font-size:16px;letter-spacing:1.35px;color:#1c1c1c;-webkit-text-stroke:0.3px #1c1c1c">752,850.00</div>
<div class="t" style="right:1747px;top:617.80px;font-size:16px;color:#4f8a66;-webkit-text-stroke:0.2px #4f8a66">22</div>
<div class="t" style="left:14.8px;top:617.8px;font-size:16px;color:#1c1c1c;letter-spacing:1.00px;-webkit-text-stroke:0.3px #1c1c1c">Channel Partners</div>
<div class="t" style="left:163.1px;top:617.8px;font-size:16px;color:#1c1c1c;letter-spacing:1.18px;-webkit-text-stroke:0.3px #1c1c1c">United States of America</div>
<div class="t" style="left:383.1px;top:617.8px;font-size:16px;color:#1c1c1c;letter-spacing:0.44px;-webkit-text-stroke:0.3px #1c1c1c">Paseo</div>
<div class="t" style="left:480.9px;top:617.8px;font-size:16px;color:#1c1c1c;letter-spacing:1.13px;-webkit-text-stroke:0.3px #1c1c1c">High</div>
<div class="t" style="right:1070.15px;top:617.80px;font-size:16px;letter-spacing:1.35px;color:#1c1c1c;-webkit-text-stroke:0.3px #1c1c1c">914</div>
<div class="t" style="left:697px;top:617.80px;font-size:16px;color:#1c1c1c;-webkit-text-stroke:0.3px #1c1c1c">$</div>
<div class="t" style="right:946.55px;top:617.80px;font-size:16px;letter-spacing:1.35px;color:#1c1c1c;-webkit-text-stroke:0.3px #1c1c1c">10.00</div>
<div class="t" style="left:827px;top:617.80px;font-size:16px;color:#1c1c1c;-webkit-text-stroke:0.3px #1c1c1c">$</div>
<div class="t" style="right:850.35px;top:617.80px;font-size:16px;letter-spacing:1.35px;color:#1c1c1c;-webkit-text-stroke:0.3px #1c1c1c">12.00</div>
<div class="t" style="left:921px;top:617.80px;font-size:16px;color:#1c1c1c;-webkit-text-stroke:0.3px #1c1c1c">$</div>
<div class="t" style="right:700.15px;top:617.80px;font-size:16px;letter-spacing:1.35px;color:#1c1c1c;-webkit-text-stroke:0.3px #1c1c1c">10,968.00</div>
<div class="t" style="left:1072px;top:617.80px;font-size:16px;color:#1c1c1c;-webkit-text-stroke:0.3px #1c1c1c">$</div>
<div class="t" style="right:576.15px;top:617.80px;font-size:16px;letter-spacing:1.35px;color:#1c1c1c;-webkit-text-stroke:0.3px #1c1c1c">1,645.20</div>
<div class="t" style="left:1197px;top:617.80px;font-size:16px;color:#1c1c1c;-webkit-text-stroke:0.3px #1c1c1c">$</div>
<div class="t" style="right:406.15px;top:617.80px;font-size:16px;letter-spacing:1.35px;color:#1c1c1c;-webkit-text-stroke:0.3px #1c1c1c">1,864.56</div>
<div class="t" style="right:1747px;top:641.59px;font-size:16px;color:#4f8a66;-webkit-text-stroke:0.2px #4f8a66">23</div>
<div class="t" style="left:14.8px;top:641.59px;font-size:16px;color:#1c1c1c;letter-spacing:1.39px;-webkit-text-stroke:0.3px #1c1c1c">Government</div>
<div class="t" style="left:163.1px;top:641.59px;font-size:16px;color:#1c1c1c;letter-spacing:0.69px;-webkit-text-stroke:0.3px #1c1c1c">France</div>
<div class="t" style="left:383.1px;top:641.59px;font-size:16px;color:#1c1c1c;letter-spacing:0.44px;-webkit-text-stroke:0.3px #1c1c1c">Paseo</div>
<div class="t" style="left:480.9px;top:641.59px;font-size:16px;color:#1c1c1c;letter-spacing:1.13px;-webkit-text-stroke:0.3px #1c1c1c">High</div>
<div class="t" style="right:1070.15px;top:641.59px;font-size:16px;letter-spacing:1.35px;color:#1c1c1c;-webkit-text-stroke:0.3px #1c1c1c">293</div>
<div class="t" style="left:697px;top:641.59px;font-size:16px;color:#1c1c1c;-webkit-text-stroke:0.3px #1c1c1c">$</div>
<div class="t" style="right:946.55px;top:641.59px;font-size:16px;letter-spacing:1.35px;color:#1c1c1c;-webkit-text-stroke:0.3px #1c1c1c">10.00</div>
<div class="t" style="left:827px;top:641.59px;font-size:16px;color:#1c1c1c;-webkit-text-stroke:0.3px #1c1c1c">$</div>
<div class="t" style="right:850.35px;top:641.59px;font-size:16px;letter-spacing:1.35px;color:#1c1c1c;-webkit-text-stroke:0.3px #1c1c1c">20.00</div>
<div class="t" style="left:921px;top:641.59px;font-size:16px;color:#1c1c1c;-webkit-text-stroke:0.3px #1c1c1c">$</div>
<div class="t" style="right:700.15px;top:641.59px;font-size:16px;letter-spacing:1.35px;color:#1c1c1c;-webkit-text-stroke:0.3px #1c1c1c">5,860.00</div>
<div class="t" style="left:1072px;top:641.59px;font-size:16px;color:#1c1c1c;-webkit-text-stroke:0.3px #1c1c1c">$</div>
<div class="t" style="right:576.15px;top:641.59px;font-size:16px;letter-spacing:1.35px;color:#1c1c1c;-webkit-text-stroke:0.3px #1c1c1c">879.00</div>
<div class="t" style="left:1197px;top:641.59px;font-size:16px;color:#1c1c1c;-webkit-text-stroke:0.3px #1c1c1c">$</div>
<div class="t" style="right:406.15px;top:641.59px;font-size:16px;letter-spacing:1.35px;color:#1c1c1c;-webkit-text-stroke:0.3px #1c1c1c">4,981.00</div>
<div class="t" style="right:1747px;top:665.38px;font-size:16px;color:#4f8a66;-webkit-text-stroke:0.2px #4f8a66">24</div>
<div class="t" style="left:14.8px;top:665.38px;font-size:16px;color:#1c1c1c;letter-spacing:1.00px;-webkit-text-stroke:0.3px #1c1c1c">Channel Partners</div>
<div class="t" style="left:163.1px;top:665.38px;font-size:16px;color:#1c1c1c;letter-spacing:1.63px;-webkit-text-stroke:0.3px #1c1c1c">Mexico</div>
<div class="t" style="left:383.1px;top:665.38px;font-size:16px;color:#1c1c1c;letter-spacing:1.35px;-webkit-text-stroke:0.3px #1c1c1c">Velo</div>
<div class="t" style="left:480.9px;top:665.38px;font-size:16px;color:#1c1c1c;letter-spacing:1.13px;-webkit-text-stroke:0.3px #1c1c1c">High</div>
<div class="t" style="right:1070.15px;top:665.38px;font-size:16px;letter-spacing:1.35px;color:#1c1c1c;-webkit-text-stroke:0.3px #1c1c1c">500</div>
<div class="t" style="left:697px;top:665.38px;font-size:16px;color:#1c1c1c;-webkit-text-stroke:0.3px #1c1c1c">$</div>
<div class="t" style="right:946.55px;top:665.38px;font-size:16px;letter-spacing:1.35px;color:#1c1c1c;-webkit-text-stroke:0.3px #1c1c1c">120.00</div>
<div class="t" style="left:827px;top:665.38px;font-size:16px;color:#1c1c1c;-webkit-text-stroke:0.3px #1c1c1c">$</div>
<div class="t" style="right:850.35px;top:665.38px;font-size:16px;letter-spacing:1.35px;color:#1c1c1c;-webkit-text-stroke:0.3px #1c1c1c">12.00</div>
<div class="t" style="left:921px;top:665.38px;font-size:16px;color:#1c1c1c;-webkit-text-stroke:0.3px #1c1c1c">$</div>
<div class="t" style="right:700.15px;top:665.38px;font-size:16px;letter-spacing:1.35px;color:#1c1c1c;-webkit-text-stroke:0.3px #1c1c1c">6,000.00</div>
<div class="t" style="left:1072px;top:665.38px;font-size:16px;color:#1c1c1c;-webkit-text-stroke:0.3px #1c1c1c">$</div>
<div class="t" style="right:576.15px;top:665.38px;font-size:16px;letter-spacing:1.35px;color:#1c1c1c;-webkit-text-stroke:0.3px #1c1c1c">900.00</div>
<div class="t" style="left:1197px;top:665.38px;font-size:16px;color:#1c1c1c;-webkit-text-stroke:0.3px #1c1c1c">$</div>
<div class="t" style="right:406.15px;top:665.38px;font-size:16px;letter-spacing:1.35px;color:#1c1c1c;-webkit-text-stroke:0.3px #1c1c1c">5,100.00</div>
<div class="t" style="right:1747px;top:689.17px;font-size:16px;color:#4f8a66;-webkit-text-stroke:0.2px #4f8a66">25</div>
<div class="t" style="left:14.8px;top:689.17px;font-size:16px;color:#1c1c1c;letter-spacing:1.91px;-webkit-text-stroke:0.3px #1c1c1c">Midmarket</div>
<div class="t" style="left:163.1px;top:689.17px;font-size:16px;color:#1c1c1c;letter-spacing:0.69px;-webkit-text-stroke:0.3px #1c1c1c">France</div>
<div class="t" style="left:383.1px;top:689.17px;font-size:16px;color:#1c1c1c;letter-spacing:1.35px;-webkit-text-stroke:0.3px #1c1c1c">Velo</div>
<div class="t" style="left:480.9px;top:689.17px;font-size:16px;color:#1c1c1c;letter-spacing:1.13px;-webkit-text-stroke:0.3px #1c1c1c">High</div>
<div class="t" style="right:1070.15px;top:689.17px;font-size:16px;letter-spacing:1.35px;color:#1c1c1c;-webkit-text-stroke:0.3px #1c1c1c">2826</div>
<div class="t" style="left:697px;top:689.17px;font-size:16px;color:#1c1c1c;-webkit-text-stroke:0.3px #1c1c1c">$</div>
<div class="t" style="right:946.55px;top:689.17px;font-size:16px;letter-spacing:1.35px;color:#1c1c1c;-webkit-text-stroke:0.3px #1c1c1c">120.00</div>
<div class="t" style="left:827px;top:689.17px;font-size:16px;color:#1c1c1c;-webkit-text-stroke:0.3px #1c1c1c">$</div>
<div class="t" style="right:850.35px;top:689.17px;font-size:16px;letter-spacing:1.35px;color:#1c1c1c;-webkit-text-stroke:0.3px #1c1c1c">15.00</div>
<div class="t" style="left:921px;top:689.17px;font-size:16px;color:#1c1c1c;-webkit-text-stroke:0.3px #1c1c1c">$</div>
<div class="t" style="right:700.15px;top:689.17px;font-size:16px;letter-spacing:1.35px;color:#1c1c1c;-webkit-text-stroke:0.3px #1c1c1c">42,390.00</div>
<div class="t" style="left:1072px;top:689.17px;font-size:16px;color:#1c1c1c;-webkit-text-stroke:0.3px #1c1c1c">$</div>
<div class="t" style="right:576.15px;top:689.17px;font-size:16px;letter-spacing:1.35px;color:#1c1c1c;-webkit-text-stroke:0.3px #1c1c1c">6,358.50</div>
<div class="t" style="left:1197px;top:689.17px;font-size:16px;color:#1c1c1c;-webkit-text-stroke:0.3px #1c1c1c">$</div>
<div class="t" style="right:406.15px;top:689.17px;font-size:16px;letter-spacing:1.35px;color:#1c1c1c;-webkit-text-stroke:0.3px #1c1c1c">35,031.50</div>
<div class="t" style="right:1747px;top:712.96px;font-size:16px;color:#4f8a66;-webkit-text-stroke:0.2px #4f8a66">26</div>
<div class="t" style="left:14.8px;top:712.96px;font-size:16px;color:#1c1c1c;letter-spacing:1.10px;-webkit-text-stroke:0.3px #1c1c1c">Enterprise</div>
<div class="t" style="left:163.1px;top:712.96px;font-size:16px;color:#1c1c1c;letter-spacing:0.69px;-webkit-text-stroke:0.3px #1c1c1c">France</div>
<div class="t" style="left:383.1px;top:712.96px;font-size:16px;color:#1c1c1c;letter-spacing:1.35px;-webkit-text-stroke:0.3px #1c1c1c">Velo</div>
<div class="t" style="left:480.9px;top:712.96px;font-size:16px;color:#1c1c1c;letter-spacing:1.13px;-webkit-text-stroke:0.3px #1c1c1c">High</div>
<div class="t" style="right:1070.15px;top:712.96px;font-size:16px;letter-spacing:1.35px;color:#1c1c1c;-webkit-text-stroke:0.3px #1c1c1c">663</div>
<div class="t" style="left:697px;top:712.96px;font-size:16px;color:#1c1c1c;-webkit-text-stroke:0.3px #1c1c1c">$</div>
<div class="t" style="right:946.55px;top:712.96px;font-size:16px;letter-spacing:1.35px;color:#1c1c1c;-webkit-text-stroke:0.3px #1c1c1c">120.00</div>
<div class="t" style="left:827px;top:712.96px;font-size:16px;color:#1c1c1c;-webkit-text-stroke:0.3px #1c1c1c">$</div>
<div class="t" style="right:850.35px;top:712.96px;font-size:16px;letter-spacing:1.35px;color:#1c1c1c;-webkit-text-stroke:0.3px #1c1c1c">125.00</div>
<div class="t" style="left:921px;top:712.96px;font-size:16px;color:#1c1c1c;-webkit-text-stroke:0.3px #1c1c1c">$</div>
<div class="t" style="right:700.15px;top:712.96px;font-size:16px;letter-spacing:1.35px;color:#1c1c1c;-webkit-text-stroke:0.3px #1c1c1c">82,875.00</div>
<div class="t" style="left:1072px;top:712.96px;font-size:16px;color:#1c1c1c;-webkit-text-stroke:0.3px #1c1c1c">$</div>
<div class="t" style="right:576.15px;top:712.96px;font-size:16px;letter-spacing:1.35px;color:#1c1c1c;-webkit-text-stroke:0.3px #1c1c1c">12,431.25</div>
<div class="t" style="left:1197px;top:712.96px;font-size:16px;color:#1c1c1c;-webkit-text-stroke:0.3px #1c1c1c">$</div>
<div class="t" style="right:406.15px;top:712.96px;font-size:16px;letter-spacing:1.35px;color:#1c1c1c;-webkit-text-stroke:0.3px #1c1c1c">70,443.75</div>
<div class="t" style="right:1747px;top:736.75px;font-size:16px;color:#4f8a66;-webkit-text-stroke:0.2px #4f8a66">27</div>
<div class="t" style="left:14.8px;top:736.75px;font-size:16px;color:#1c1c1c;letter-spacing:0.67px;-webkit-text-stroke:0.3px #1c1c1c">Small Business</div>
<div class="t" style="left:163.1px;top:736.75px;font-size:16px;color:#1c1c1c;letter-spacing:1.18px;-webkit-text-stroke:0.3px #1c1c1c">United States of America</div>
<div class="t" style="left:383.1px;top:736.75px;font-size:16px;color:#1c1c1c;letter-spacing:1.35px;-webkit-text-stroke:0.3px #1c1c1c">Velo</div>
<div class="t" style="left:480.9px;top:736.75px;font-size:16px;color:#1c1c1c;letter-spacing:1.13px;-webkit-text-stroke:0.3px #1c1c1c">High</div>
<div class="t" style="right:1070.15px;top:736.75px;font-size:16px;letter-spacing:1.35px;color:#1c1c1c;-webkit-text-stroke:0.3px #1c1c1c">2574</div>
<div class="t" style="left:697px;top:736.75px;font-size:16px;color:#1c1c1c;-webkit-text-stroke:0.3px #1c1c1c">$</div>
<div class="t" style="right:946.55px;top:736.75px;font-size:16px;letter-spacing:1.35px;color:#1c1c1c;-webkit-text-stroke:0.3px #1c1c1c">120.00</div>
<div class="t" style="left:827px;top:736.75px;font-size:16px;color:#1c1c1c;-webkit-text-stroke:0.3px #1c1c1c">$</div>
<div class="t" style="right:850.35px;top:736.75px;font-size:16px;letter-spacing:1.35px;color:#1c1c1c;-webkit-text-stroke:0.3px #1c1c1c">300.00</div>
<div class="t" style="left:921px;top:736.75px;font-size:16px;color:#1c1c1c;-webkit-text-stroke:0.3px #1c1c1c">$</div>
<div class="t" style="right:700.15px;top:736.75px;font-size:16px;letter-spacing:1.35px;color:#1c1c1c;-webkit-text-stroke:0.3px #1c1c1c">772,200.00</div>
<div class="t" style="left:1072px;top:736.75px;font-size:16px;color:#1c1c1c;-webkit-text-stroke:0.3px #1c1c1c">$</div>
<div class="t" style="left:1079.5px;top:736.75px;font-size:16px;color:#1c1c1c;letter-spacing:1.92px;-webkit-text-stroke:0.3px #1c1c1c">115,830.00</div>
<div class="t" style="left:1197px;top:736.75px;font-size:16px;color:#1c1c1c;-webkit-text-stroke:0.3px #1c1c1c">$</div>
<div class="t" style="right:406.15px;top:736.75px;font-size:16px;letter-spacing:1.35px;color:#1c1c1c;-webkit-text-stroke:0.3px #1c1c1c">656,370.00</div>
<div class="t" style="right:1747px;top:760.54px;font-size:16px;color:#4f8a66;-webkit-text-stroke:0.2px #4f8a66">28</div>
<div class="t" style="left:14.8px;top:760.54px;font-size:16px;color:#1c1c1c;letter-spacing:1.10px;-webkit-text-stroke:0.3px #1c1c1c">Enterprise</div>
<div class="t" style="left:163.1px;top:760.54px;font-size:16px;color:#1c1c1c;letter-spacing:1.18px;-webkit-text-stroke:0.3px #1c1c1c">United States of America</div>
<div class="t" style="left:383.1px;top:760.54px;font-size:16px;color:#1c1c1c;letter-spacing:1.35px;-webkit-text-stroke:0.3px #1c1c1c">Velo</div>
<div class="t" style="left:480.9px;top:760.54px;font-size:16px;color:#1c1c1c;letter-spacing:1.13px;-webkit-text-stroke:0.3px #1c1c1c">High</div>
<div class="t" style="right:1070.15px;top:760.54px;font-size:16px;letter-spacing:1.35px;color:#1c1c1c;-webkit-text-stroke:0.3px #1c1c1c">2438</div>
<div class="t" style="left:697px;top:760.54px;font-size:16px;color:#1c1c1c;-webkit-text-stroke:0.3px #1c1c1c">$</div>
<div class="t" style="right:946.55px;top:760.54px;font-size:16px;letter-spacing:1.35px;color:#1c1c1c;-webkit-text-stroke:0.3px #1c1c1c">120.00</div>
<div class="t" style="left:827px;top:760.54px;font-size:16px;color:#1c1c1c;-webkit-text-stroke:0.3px #1c1c1c">$</div>
<div class="t" style="right:850.35px;top:760.54px;font-size:16px;letter-spacing:1.35px;color:#1c1c1c;-webkit-text-stroke:0.3px #1c1c1c">125.00</div>
<div class="t" style="left:921px;top:760.54px;font-size:16px;color:#1c1c1c;-webkit-text-stroke:0.3px #1c1c1c">$</div>
<div class="t" style="right:700.15px;top:760.54px;font-size:16px;letter-spacing:1.35px;color:#1c1c1c;-webkit-text-stroke:0.3px #1c1c1c">304,750.00</div>
<div class="t" style="left:1072px;top:760.54px;font-size:16px;color:#1c1c1c;-webkit-text-stroke:0.3px #1c1c1c">$</div>
<div class="t" style="right:576.15px;top:760.54px;font-size:16px;letter-spacing:1.35px;color:#1c1c1c;-webkit-text-stroke:0.3px #1c1c1c">45,712.50</div>
<div class="t" style="left:1197px;top:760.54px;font-size:16px;color:#1c1c1c;-webkit-text-stroke:0.3px #1c1c1c">$</div>
<div class="t" style="right:406.15px;top:760.54px;font-size:16px;letter-spacing:1.35px;color:#1c1c1c;-webkit-text-stroke:0.3px #1c1c1c">259,037.50</div>
<div class="t" style="right:1747px;top:784.33px;font-size:16px;color:#4f8a66;-webkit-text-stroke:0.2px #4f8a66">29</div>
<div class="t" style="left:14.8px;top:784.33px;font-size:16px;color:#1c1c1c;letter-spacing:1.00px;-webkit-text-stroke:0.3px #1c1c1c">Channel Partners</div>
<div class="t" style="left:163.1px;top:784.33px;font-size:16px;color:#1c1c1c;letter-spacing:1.18px;-webkit-text-stroke:0.3px #1c1c1c">United States of America</div>
<div class="t" style="left:383.1px;top:784.33px;font-size:16px;color:#1c1c1c;letter-spacing:1.35px;-webkit-text-stroke:0.3px #1c1c1c">Velo</div>
<div class="t" style="left:480.9px;top:784.33px;font-size:16px;color:#1c1c1c;letter-spacing:1.13px;-webkit-text-stroke:0.3px #1c1c1c">High</div>
<div class="t" style="right:1070.15px;top:784.33px;font-size:16px;letter-spacing:1.35px;color:#1c1c1c;-webkit-text-stroke:0.3px #1c1c1c">914</div>
<div class="t" style="left:697px;top:784.33px;font-size:16px;color:#1c1c1c;-webkit-text-stroke:0.3px #1c1c1c">$</div>
<div class="t" style="right:946.55px;top:784.33px;font-size:16px;letter-spacing:1.35px;color:#1c1c1c;-webkit-text-stroke:0.3px #1c1c1c">120.00</div>
<div class="t" style="left:827px;top:784.33px;font-size:16px;color:#1c1c1c;-webkit-text-stroke:0.3px #1c1c1c">$</div>
<div class="t" style="right:850.35px;top:784.33px;font-size:16px;letter-spacing:1.35px;color:#1c1c1c;-webkit-text-stroke:0.3px #1c1c1c">12.00</div>
<div class="t" style="left:921px;top:784.33px;font-size:16px;color:#1c1c1c;-webkit-text-stroke:0.3px #1c1c1c">$</div>
<div class="t" style="right:700.15px;top:784.33px;font-size:16px;letter-spacing:1.35px;color:#1c1c1c;-webkit-text-stroke:0.3px #1c1c1c">10,968.00</div>
<div class="t" style="left:1072px;top:784.33px;font-size:16px;color:#1c1c1c;-webkit-text-stroke:0.3px #1c1c1c">$</div>
<div class="t" style="right:576.15px;top:784.33px;font-size:16px;letter-spacing:1.35px;color:#1c1c1c;-webkit-text-stroke:0.3px #1c1c1c">1,645.20</div>
<div class="t" style="left:1197px;top:784.33px;font-size:16px;color:#1c1c1c;-webkit-text-stroke:0.3px #1c1c1c">$</div>
<div class="t" style="right:406.15px;top:784.33px;font-size:16px;letter-spacing:1.35px;color:#1c1c1c;-webkit-text-stroke:0.3px #1c1c1c">9,322.56</div>
<div class="t" style="right:1747px;top:808.12px;font-size:16px;color:#4f8a66;-webkit-text-stroke:0.2px #4f8a66">30</div>
<div class="t" style="left:14.8px;top:808.12px;font-size:16px;color:#1c1c1c;letter-spacing:1.39px;-webkit-text-stroke:0.3px #1c1c1c">Government</div>
<div class="t" style="left:163.1px;top:808.12px;font-size:16px;color:#1c1c1c;letter-spacing:0.53px;-webkit-text-stroke:0.3px #1c1c1c">Canada</div>
<div class="t" style="left:383.1px;top:808.12px;font-size:16px;color:#1c1c1c;letter-spacing:-0.47px;-webkit-text-stroke:0.3px #1c1c1c">VTT</div>
<div class="t" style="left:480.9px;top:808.12px;font-size:16px;color:#1c1c1c;letter-spacing:1.13px;-webkit-text-stroke:0.3px #1c1c1c">High</div>
<div class="t" style="right:1070.15px;top:808.12px;font-size:16px;letter-spacing:1.35px;color:#1c1c1c;-webkit-text-stroke:0.3px #1c1c1c">865.5</div>
<div class="t" style="left:697px;top:808.12px;font-size:16px;color:#1c1c1c;-webkit-text-stroke:0.3px #1c1c1c">$</div>
<div class="t" style="right:946.55px;top:808.12px;font-size:16px;letter-spacing:1.35px;color:#1c1c1c;-webkit-text-stroke:0.3px #1c1c1c">250.00</div>
<div class="t" style="left:827px;top:808.12px;font-size:16px;color:#1c1c1c;-webkit-text-stroke:0.3px #1c1c1c">$</div>
<div class="t" style="right:850.35px;top:808.12px;font-size:16px;letter-spacing:1.35px;color:#1c1c1c;-webkit-text-stroke:0.3px #1c1c1c">20.00</div>
<div class="t" style="left:921px;top:808.12px;font-size:16px;color:#1c1c1c;-webkit-text-stroke:0.3px #1c1c1c">$</div>
<div class="t" style="right:700.15px;top:808.12px;font-size:16px;letter-spacing:1.35px;color:#1c1c1c;-webkit-text-stroke:0.3px #1c1c1c">17,310.00</div>
<div class="t" style="left:1072px;top:808.12px;font-size:16px;color:#1c1c1c;-webkit-text-stroke:0.3px #1c1c1c">$</div>
<div class="t" style="right:576.15px;top:808.12px;font-size:16px;letter-spacing:1.35px;color:#1c1c1c;-webkit-text-stroke:0.3px #1c1c1c">2,596.50</div>
<div class="t" style="left:1197px;top:808.12px;font-size:16px;color:#1c1c1c;-webkit-text-stroke:0.3px #1c1c1c">$</div>
<div class="t" style="right:406.15px;top:808.12px;font-size:16px;letter-spacing:1.35px;color:#1c1c1c;-webkit-text-stroke:0.3px #1c1c1c">14,715.50</div>
<div class="t" style="right:1747px;top:831.91px;font-size:16px;color:#4f8a66;-webkit-text-stroke:0.2px #4f8a66">31</div>
<div class="t" style="left:14.8px;top:831.91px;font-size:16px;color:#1c1c1c;letter-spacing:1.91px;-webkit-text-stroke:0.3px #1c1c1c">Midmarket</div>
<div class="t" style="left:163.1px;top:831.91px;font-size:16px;color:#1c1c1c;letter-spacing:1.33px;-webkit-text-stroke:0.3px #1c1c1c">Germany</div>
<div class="t" style="left:383.1px;top:831.91px;font-size:16px;color:#1c1c1c;letter-spacing:-0.47px;-webkit-text-stroke:0.3px #1c1c1c">VTT</div>
<div class="t" style="left:480.9px;top:831.91px;font-size:16px;color:#1c1c1c;letter-spacing:1.13px;-webkit-text-stroke:0.3px #1c1c1c">High</div>
<div class="t" style="right:1070.15px;top:831.91px;font-size:16px;letter-spacing:1.35px;color:#1c1c1c;-webkit-text-stroke:0.3px #1c1c1c">403</div>
<div class="t" style="left:697px;top:831.91px;font-size:16px;color:#1c1c1c;-webkit-text-stroke:0.3px #1c1c1c">$</div>
<div class="t" style="right:946.55px;top:831.91px;font-size:16px;letter-spacing:1.35px;color:#1c1c1c;-webkit-text-stroke:0.3px #1c1c1c">250.00</div>
<div class="t" style="left:827px;top:831.91px;font-size:16px;color:#1c1c1c;-webkit-text-stroke:0.3px #1c1c1c">$</div>
<div class="t" style="right:850.35px;top:831.91px;font-size:16px;letter-spacing:1.35px;color:#1c1c1c;-webkit-text-stroke:0.3px #1c1c1c">15.00</div>
<div class="t" style="left:921px;top:831.91px;font-size:16px;color:#1c1c1c;-webkit-text-stroke:0.3px #1c1c1c">$</div>
<div class="t" style="right:700.15px;top:831.91px;font-size:16px;letter-spacing:1.35px;color:#1c1c1c;-webkit-text-stroke:0.3px #1c1c1c">7,300.00</div>
<div class="t" style="left:1072px;top:831.91px;font-size:16px;color:#1c1c1c;-webkit-text-stroke:0.3px #1c1c1c">$</div>
<div class="t" style="right:576.15px;top:831.91px;font-size:16px;letter-spacing:1.35px;color:#1c1c1c;-webkit-text-stroke:0.3px #1c1c1c">1,107.00</div>
<div class="t" style="left:1197px;top:831.91px;font-size:16px;color:#1c1c1c;-webkit-text-stroke:0.3px #1c1c1c">$</div>
<div class="t" style="right:406.15px;top:831.91px;font-size:16px;letter-spacing:1.35px;color:#1c1c1c;-webkit-text-stroke:0.3px #1c1c1c">6,273.00</div>
<div class="t" style="left:1369px;top:808.12px;font-size:16px;color:#1c1c1c;-webkit-text-stroke:0.3px #1c1c1c">$</div>
<div class="t" style="left:1398px;top:808.12px;font-size:16px;color:#1c1c1c;-webkit-text-stroke:0.3px #1c1c1c">0</div>
<div class="t" style="left:1369px;top:831.91px;font-size:16px;color:#1c1c1c;-webkit-text-stroke:0.3px #1c1c1c">$</div>
<div class="t" style="left:1398px;top:831.91px;font-size:16px;color:#1c1c1c;-webkit-text-stroke:0.3px #1c1c1c">4</div>
<div class="a" style="left:0;top:155px;width:1756px;height:54px;background:#e7e7e7"></div>
<div class="a" style="left:0;top:155px;width:1756px;height:6px;background:linear-gradient(#d6d6d6,#e7e7e7)"></div>
<div class="a" style="left:0;top:169.5px;width:120px;height:25px;background:#fff"></div>
<div class="t" style="left:-1.2px;top:174.46px;font-size:16px;color:#444;letter-spacing:1.67px;">698</div>
<svg style="left:102px;top:179px" width="10" height="6"><path d="M0 0 L9 0 L4.5 5 Z" fill="#555"/></svg>
<svg style="left:140px;top:176px" width="4" height="14"><circle cx="2" cy="2" r="1" fill="#999"/><circle cx="2" cy="7" r="1" fill="#999"/><circle cx="2" cy="12" r="1" fill="#999"/></svg>
<div class="a" style="left:165px;top:169.5px;width:149px;height:25px;background:#fff"></div>
<svg style="left:181px;top:175px" width="16" height="14"><path d="M1 1 L14 13 M14 1 L1 13" stroke="#aaa" stroke-width="1.6"/></svg>
<svg style="left:230px;top:175px" width="20" height="15"><path d="M1 8 L7 13 L18 2" stroke="#aaa" stroke-width="2" fill="none"/></svg>
<div class="t" style="left:281px;top:173px;font-family:'Liberation Serif',serif;font-style:italic;font-size:19px;color:#555">fx</div>
<div class="a" style="left:320.5px;top:169.5px;width:1436px;height:25px;background:#fff"></div>
<div class="t" style="left:335.0px;top:174.46px;font-size:16px;color:#333;letter-spacing:1.62px;">300</div>
<svg style="left:1731px;top:178px" width="13" height="8"><path d="M1 1 L6.5 6 L12 1" stroke="#555" stroke-width="1.6" fill="none"/></svg>
<div class="a" style="left:0;top:0;width:1756px;height:155px;background:#f3f2f1"></div>
<div class="t" style="left:-0.5px;top:8px;font-size:17px;color:#555;letter-spacing:-0.47px;">File</div>
<div class="t" style="left:68.7px;top:8px;font-size:17px;color:#333;letter-spacing:1.02px;font-weight:bold;">Home</div>
<div class="t" style="left:158.0px;top:8px;font-size:17px;color:#555;letter-spacing:0.50px;">Insert</div>
<div class="t" style="left:243.0px;top:8px;font-size:17px;color:#555;letter-spacing:0.49px;">Page Layout</div>
<div class="t" style="left:383.0px;top:8px;font-size:17px;color:#555;letter-spacing:0.52px;">Formulas</div>
<div class="t" style="left:496.3px;top:8px;font-size:17px;color:#555;letter-spacing:0.67px;">Data</div>
<div class="t" style="left:573.2px;top:8px;font-size:17px;color:#555;letter-spacing:0.08px;">Review</div>
<div class="t" style="left:667.5px;top:8px;font-size:17px;color:#555;letter-spacing:1.08px;">View</div>
<div class="t" style="left:744.6px;top:8px;font-size:17px;color:#555;letter-spacing:0.95px;">Developer</div>
<div class="t" style="left:866.6px;top:8px;font-size:17px;color:#555;letter-spacing:0.97px;">Help</div>
<div class="t" style="left:943.5px;top:8px;font-size:17px;color:#555;letter-spacing:0.49px;">Script Lab</div>
<div class="a" style="left:68px;top:28px;width:52px;height:4px;background:#257a48;border-radius:1px"></div>
<div class="a" style="left:1497px;top:2px;width:91px;height:27px;background:#fff;border:1px solid #e4e2e0;border-radius:3px"></div>
<div class="t" style="left:1530px;top:7px;font-size:17px;font-weight:bold;color:#2f7a52">Share</div>
<svg style="left:1506px;top:8px" width="18" height="16"><path d="M1 6 L1 14 L15 14 L15 9" stroke="#666" stroke-width="1.3" fill="none"/><path d="M5 11 C6 6 9 5 13 5 L13 2 L17 6 L13 10 L13 7 C10 7 7 8 5 11 Z" stroke="#666" stroke-width="1.2" fill="none"/></svg>
<div class="a" style="left:1602px;top:2px;width:136px;height:27px;background:#fff;border:1px solid #e4e2e0;border-radius:3px"></div>
<div class="t" style="left:1635px;top:7px;font-size:17px;font-weight:bold;color:#2f7a52">Comments</div>
<svg style="left:1612px;top:8px" width="17" height="16"><path d="M1 1 L15 1 L15 10 L6 10 L3 13 L3 10 L1 10 Z" stroke="#666" stroke-width="1.3" fill="none"/></svg>
<div class="a" style="left:107px;top:40px;width:1px;height:110px;background:#cfcdcb"></div>
<div class="a" style="left:413px;top:40px;width:1px;height:110px;background:#cfcdcb"></div>
<div class="a" style="left:792px;top:40px;width:1px;height:110px;background:#cfcdcb"></div>
<div class="a" style="left:997px;top:40px;width:1px;height:110px;background:#cfcdcb"></div>
<div class="a" style="left:1266px;top:40px;width:1px;height:110px;background:#cfcdcb"></div>
<div class="a" style="left:1400px;top:40px;width:1px;height:110px;background:#cfcdcb"></div>
<div class="a" style="left:1601px;top:40px;width:1px;height:110px;background:#cfcdcb"></div>
<div class="a" style="left:1682px;top:40px;width:1px;height:110px;background:#cfcdcb"></div>
<div class="t" style="left:-30px;width:120px;text-align:center;top:137px;font-size:14px;color:#555">Clipboard</div>
<div class="t" style="left:188px;width:120px;text-align:center;top:137px;font-size:14px;color:#555">Font</div>
<div class="t" style="left:531px;width:120px;text-align:center;top:137px;font-size:14px;color:#555">Alignment</div>
<div class="t" style="left:824px;width:120px;text-align:center;top:137px;font-size:14px;color:#555">Number</div>
<div class="t" style="left:1071px;width:120px;text-align:center;top:137px;font-size:14px;color:#555">Styles</div>
<div class="t" style="left:1273px;width:120px;text-align:center;top:137px;font-size:14px;color:#555">Cells</div>
<div class="t" style="left:1440px;width:120px;text-align:center;top:137px;font-size:14px;color:#555">Editing</div>
<div class="t" style="left:1580px;width:120px;text-align:center;top:137px;font-size:14px;color:#555">Ideas</div>
<svg style="left:91px;top:138px" width="13" height="13"><path d="M1.5 9 L1.5 1.5 L9 1.5" stroke="#666" stroke-width="1.3" fill="none"/><path d="M4.5 4.5 L10.5 10.5 M6 11 L11 11 L11 6" stroke="#444" stroke-width="1.5" fill="none"/></svg>
<svg style="left:397px;top:138px" width="13" height="13"><path d="M1.5 9 L1.5 1.5 L9 1.5" stroke="#666" stroke-width="1.3" fill="none"/><path d="M4.5 4.5 L10.5 10.5 M6 11 L11 11 L11 6" stroke="#444" stroke-width="1.5" fill="none"/></svg>
<svg style="left:777px;top:138px" width="13" height="13"><path d="M1.5 9 L1.5 1.5 L9 1.5" stroke="#666" stroke-width="1.3" fill="none"/><path d="M4.5 4.5 L10.5 10.5 M6 11 L11 11 L11 6" stroke="#444" stroke-width="1.5" fill="none"/></svg>
<svg style="left:980px;top:138px" width="13" height="13"><path d="M1.5 9 L1.5 1.5 L9 1.5" stroke="#666" stroke-width="1.3" fill="none"/><path d="M4.5 4.5 L10.5 10.5 M6 11 L11 11 L11 6" stroke="#444" stroke-width="1.5" fill="none"/></svg>
<svg style="left:0;top:44px" width="40" height="40"><path d="M-2 4 L6 4 C7 0 9 -0.5 13.5 -0.5 C18 -0.5 20 0 21 4 L27 4 L27 15" stroke="#c3c3c3" stroke-width="1.8" fill="#ececec"/><rect x="-2" y="4" width="29" height="30" fill="#ececec" stroke="#c3c3c3" stroke-width="1.8"/><rect x="5" y="3" width="17" height="5" fill="#ececec" stroke="#c3c3c3" stroke-width="1.6"/><rect x="17.5" y="16" width="18" height="21.5" fill="#e6e6e6" stroke="#bcbcbc" stroke-width="1.8"/></svg>
<div class="t" style="left:-1.0px;top:87.8px;font-size:15px;color:#c4c4c4;letter-spacing:-1.31px;">Paste</div>
<svg style="left:9px;top:111px" width="10" height="6.0"><path d="M1 1 L5.0 5.0 L9 1" stroke="#c4c4c4" stroke-width="1.4" fill="none"/></svg>
<svg style="left:44px;top:40px" width="30" height="28"><path d="M11 4 L19 18 M18.5 4 L11 18" stroke="#454545" stroke-width="1.6" stroke-linecap="round"/><circle cx="10.8" cy="20.5" r="2.6" fill="#8cc8ec" stroke="#3f8ec8" stroke-width="1.5"/><circle cx="19" cy="20.5" r="2.6" fill="#8cc8ec" stroke="#3f8ec8" stroke-width="1.5"/></svg>
<svg style="left:47px;top:72px" width="26" height="24"><path d="M1 1 L8 1 L10 3 L10 17 L1 17 Z" fill="#fafafa" stroke="#444" stroke-width="1.5"/><path d="M9 5 L18 5 L22 9 L22 20 L9 20 Z" fill="#fafafa" stroke="#444" stroke-width="1.5"/><path d="M18 5 L18 9 L22 9" fill="none" stroke="#444" stroke-width="1.2"/><rect x="13" y="14" width="5" height="3" fill="#888"/></svg>
<svg style="left:80px;top:82px" width="10" height="6.0"><path d="M1 1 L5.0 5.0 L9 1" stroke="#555" stroke-width="1.4" fill="none"/></svg>
<svg style="left:44px;top:98px" width="30" height="30"><g transform="rotate(45 18 13)"><rect x="16" y="0.5" width="4.5" height="8" rx="2" fill="#fff" stroke="#444" stroke-width="1.5"/><rect x="12" y="8.5" width="12" height="5.5" fill="#fff" stroke="#444" stroke-width="1.5"/><path d="M11.5 14 L24.5 14 L23 24 L13 24 Z" fill="#f2a84a" stroke="#e08a2c" stroke-width="1"/><path d="M12 14 L24 14 L23.5 18 L12.5 18 Z" fill="#fdf3e6"/></g></svg>
<div class="a" style="left:119.5px;top:49.5px;width:151px;height:28px;background:#fff;border:1px solid #d2d0ce"></div>
<div class="t" style="left:122.4px;top:56.46px;font-size:16px;color:#333;letter-spacing:0.11px;">Calibri</div>
<svg style="left:257px;top:61px" width="10" height="6.0"><path d="M1 1 L5.0 5.0 L9 1" stroke="#555" stroke-width="1.4" fill="none"/></svg>
<div class="a" style="left:271px;top:49.5px;width:69.5px;height:28px;background:#fff;border:1px solid #d2d0ce"></div>
<div class="t" style="left:276.0px;top:56.46px;font-size:16px;color:#333;letter-spacing:-1.50px;">11</div>
<svg style="left:328px;top:61px" width="10" height="6.0"><path d="M1 1 L5.0 5.0 L9 1" stroke="#555" stroke-width="1.4" fill="none"/></svg>
<div class="t" style="left:347.0px;top:51.58px;font-size:22px;color:#444;letter-spacing:0.00px;">A</div>
<svg style="left:361px;top:53px" width="10" height="7"><path d="M1 5 L4.5 1.5 L8 5" stroke="#5b7d95" stroke-width="1.7" fill="none"/></svg>
<div class="t" style="left:380.0px;top:55.81px;font-size:17px;color:#444;letter-spacing:0.00px;">A</div>
<svg style="left:391px;top:53px" width="10" height="7"><path d="M1.5 1.5 L5 5 L8.5 1.5" stroke="#4a9fbf" stroke-width="1.9" fill="none"/></svg>
<div class="t" style="left:128px;top:94px;font-size:17px;font-weight:bold;color:#333">B</div>
<div class="t" style="left:159px;top:94px;font-size:17px;font-style:italic;font-family:'Liberation Serif',serif;color:#333">I</div>
<div class="t" style="left:187px;top:94px;font-size:17px;color:#333">U</div>
<div class="a" style="left:188px;top:111px;width:12px;height:1.5px;background:#555"></div>
<svg style="left:215px;top:101px" width="10" height="6.0"><path d="M1 1 L5.0 5.0 L9 1" stroke="#555" stroke-width="1.4" fill="none"/></svg>
<div class="a" style="left:235px;top:90px;width:1px;height:26px;background:#d6d4d2"></div>
<svg style="left:244px;top:92px" width="22" height="21"><path d="M1 1 L20 1 M1 1 L1 19 M20 1 L20 19 M1 10 L20 10" stroke="#666" stroke-width="1.3" stroke-dasharray="1.5 1.5" fill="none"/><path d="M10.5 1 L10.5 19 M0 19.5 L21 19.5" stroke="#555" stroke-width="1.6"/></svg>
<svg style="left:275px;top:101px" width="10" height="6.0"><path d="M1 1 L5.0 5.0 L9 1" stroke="#555" stroke-width="1.4" fill="none"/></svg>
<div class="a" style="left:295px;top:90px;width:1px;height:26px;background:#d6d4d2"></div>
<svg style="left:298px;top:88px" width="34" height="30"><path d="M10 13.3 L16.8 6.3 L18.8 5.8 L19.6 7.5 L19.6 12.2 L21.2 14.4 L16.2 18.6 Z" fill="#fff" stroke="#454545" stroke-width="1.6" stroke-linejoin="round"/><path d="M22 10 C24.5 9 26.3 12 25.8 16.5 L23.3 15.5 C23.5 13 23.2 11.8 22 11.2 Z" fill="#2a6090"/><rect x="4.5" y="20" width="24" height="5" rx="2.5" fill="#eef000"/></svg>
<svg style="left:335px;top:101px" width="10" height="6.0"><path d="M1 1 L5.0 5.0 L9 1" stroke="#555" stroke-width="1.4" fill="none"/></svg>
<div class="t" style="left:358px;top:91px;font-size:19px;color:#444">A</div>
<div class="a" style="left:355px;top:108px;width:23px;height:5px;background:#d40000"></div>
<svg style="left:387px;top:101px" width="10" height="6.0"><path d="M1 1 L5.0 5.0 L9 1" stroke="#555" stroke-width="1.4" fill="none"/></svg>
<svg style="left:429px;top:51px" width="22" height="19.5"><path d="M1.0 1.5 L21.0 1.5" stroke="#555" stroke-width="1.7"/><path d="M4.0 7.0 L18.0 7.0" stroke="#555" stroke-width="1.7"/><path d="M1.0 12.5 L21.0 12.5" stroke="#555" stroke-width="1.7"/></svg>
<svg style="left:460px;top:55px" width="22" height="19.5"><path d="M1.0 1.5 L21.0 1.5" stroke="#555" stroke-width="1.7"/><path d="M4.0 7.0 L18.0 7.0" stroke="#555" stroke-width="1.7"/><path d="M1.0 12.5 L21.0 12.5" stroke="#555" stroke-width="1.7"/></svg>
<div class="a" style="left:486px;top:49px;width:31px;height:28px;background:#c8c8c8"></div>
<svg style="left:493px;top:60px" width="22" height="19.5"><path d="M2.0 1.5 L20.0 1.5" stroke="#444" stroke-width="1.7"/><path d="M2.0 7.0 L20.0 7.0" stroke="#444" stroke-width="1.7"/><path d="M2.0 12.5 L20.0 12.5" stroke="#444" stroke-width="1.7"/></svg>
<div class="a" style="left:521px;top:50px;width:1px;height:27px;background:#d6d4d2"></div>
<svg style="left:524px;top:46px" width="34" height="30"><text x="3" y="19" font-family="Liberation Sans" font-size="13.5" fill="#555" transform="rotate(-45 9 13)">ab</text><path d="M12.5 24.5 L27 11" stroke="#2b9ad6" stroke-width="1.6"/><path d="M21.5 11 L27.5 10.5 L27 16.5" stroke="#2b9ad6" stroke-width="1.6" fill="none"/></svg>
<svg style="left:558px;top:61px" width="9" height="5.5"><path d="M1 1 L4.5 4.5 L8 1" stroke="#555" stroke-width="1.4" fill="none"/></svg>
<svg style="left:429px;top:93px" width="22" height="25.0"><path d="M1 1.5 L21 1.5" stroke="#555" stroke-width="1.7"/><path d="M1 7.0 L14 7.0" stroke="#555" stroke-width="1.7"/><path d="M1 12.5 L21 12.5" stroke="#555" stroke-width="1.7"/><path d="M1 18.0 L14 18.0" stroke="#555" stroke-width="1.7"/></svg>
<svg style="left:460px;top:93px" width="22" height="25.0"><path d="M1.0 1.5 L21.0 1.5" stroke="#555" stroke-width="1.7"/><path d="M4.5 7.0 L17.5 7.0" stroke="#555" stroke-width="1.7"/><path d="M1.0 12.5 L21.0 12.5" stroke="#555" stroke-width="1.7"/><path d="M4.5 18.0 L17.5 18.0" stroke="#555" stroke-width="1.7"/></svg>
<svg style="left:491px;top:93px" width="22" height="25.0"><path d="M1 1.5 L21 1.5" stroke="#555" stroke-width="1.7"/><path d="M8 7.0 L21 7.0" stroke="#555" stroke-width="1.7"/><path d="M1 12.5 L21 12.5" stroke="#555" stroke-width="1.7"/><path d="M8 18.0 L21 18.0" stroke="#555" stroke-width="1.7"/></svg>
<div class="a" style="left:521px;top:91px;width:1px;height:27px;background:#d6d4d2"></div>
<svg style="left:529px;top:93px" width="22" height="20"><path d="M1 1.5 L21 1.5 M10 7 L21 7 M10 12.5 L21 12.5 M1 18 L21 18" stroke="#555" stroke-width="1.7"/><path d="M2 9.5 L8 9.5 M5 6.5 L2 9.5 L5 12.5" stroke="#2b9ad6" stroke-width="1.5" fill="none"/></svg>
<svg style="left:560px;top:93px" width="22" height="20"><path d="M1 1.5 L21 1.5 M10 7 L21 7 M10 12.5 L21 12.5 M1 18 L21 18" stroke="#555" stroke-width="1.7"/><path d="M1 9.5 L8 9.5 M5 6.5 L8 9.5 L5 12.5" stroke="#2b9ad6" stroke-width="1.5" fill="none"/></svg>
<div class="a" style="left:592px;top:47px;width:1px;height:73px;background:#d6d4d2"></div>
<svg style="left:604px;top:50px" width="26" height="26"><text x="1.5" y="12.5" font-family="Liberation Sans" font-size="12.5" fill="#555">ab</text><text x="1.5" y="21.5" font-family="Liberation Sans" font-size="12.5" fill="#555">c</text><path d="M20.5 12.5 C22.5 16 20 20 14 20.5 M16.5 17.5 L13.5 20.5 L16.5 23.5" stroke="#2b9ad6" stroke-width="1.7" fill="none"/></svg>
<div class="t" style="left:630.0px;top:56.76px;font-size:16px;color:#444;letter-spacing:0.22px;">Wrap Text</div>
<svg style="left:602px;top:92px" width="24" height="22"><rect x="1" y="1" width="21" height="19" fill="#fff" stroke="#555" stroke-width="1.5"/><path d="M1 5.5 L22 5.5 M1 15.5 L22 15.5" stroke="#555" stroke-width="1.3"/><rect x="2" y="6" width="19" height="9" fill="#bfe0f5"/><path d="M5 10.5 L18 10.5 M7.5 8 L5 10.5 L7.5 13 M15.5 8 L18 10.5 L15.5 13" stroke="#2b8ad0" stroke-width="1.4" fill="none"/></svg>
<div class="t" style="left:631.0px;top:96.66px;font-size:16px;color:#444;letter-spacing:0.50px;">Merge &amp; Center</div>
<svg style="left:765px;top:101px" width="10" height="6.0"><path d="M1 1 L5.0 5.0 L9 1" stroke="#555" stroke-width="1.4" fill="none"/></svg>
<div class="a" style="left:805px;top:49.5px;width:182px;height:28px;background:#fff;border:1px solid #d2d0ce"></div>
<div class="t" style="left:808.7px;top:56.56px;font-size:16px;color:#333;letter-spacing:0.44px;">Accounting</div>
<svg style="left:973px;top:61px" width="10" height="6.0"><path d="M1 1 L5.0 5.0 L9 1" stroke="#555" stroke-width="1.4" fill="none"/></svg>
<div class="t" style="left:812px;top:92px;font-size:21px;color:#444">$</div>
<svg style="left:840px;top:101px" width="9" height="5.5"><path d="M1 1 L4.5 4.5 L8 1" stroke="#555" stroke-width="1.4" fill="none"/></svg>
<div class="t" style="left:859px;top:92px;font-size:21px;color:#444">%</div>
<svg style="left:895px;top:94px" width="16" height="20"><circle cx="7.5" cy="7" r="4.6" fill="#333"/><path d="M10.5 6 C12.5 11 10 15.5 3.5 18" stroke="#333" stroke-width="3" fill="none" stroke-linecap="round"/></svg>
<div class="a" style="left:921px;top:90px;width:1px;height:27px;background:#d6d4d2"></div>
<svg style="left:928px;top:92px" width="26" height="22"><text x="13" y="10" font-family="Liberation Sans" font-size="11" font-weight="bold" fill="#555">0</text><text x="8" y="20" font-family="Liberation Sans" font-size="11" font-weight="bold" fill="#555">.00</text><path d="M2 6 L11 6 M5 3 L2 6 L5 9" stroke="#2b9ad6" stroke-width="1.6" fill="none"/></svg>
<svg style="left:959px;top:92px" width="26" height="22"><text x="8" y="10" font-family="Liberation Sans" font-size="11" font-weight="bold" fill="#555">.00</text><text x="15" y="20" font-family="Liberation Sans" font-size="11" font-weight="bold" fill="#555">0</text><path d="M2 16 L12 16 M9 13 L12 16 L9 19" stroke="#2b9ad6" stroke-width="1.6" fill="none"/></svg>
<svg style="left:1040px;top:47px" width="42" height="30"><rect x="1" y="1" width="38" height="27" fill="#fff" stroke="#555" stroke-width="1.6"/><rect x="8" y="2" width="16" height="8" fill="#e8607a"/><rect x="8" y="10" width="10" height="9" fill="#5b9fe0"/><rect x="8" y="19" width="19" height="8" fill="#e8607a"/><path d="M1 10 L39 10 M1 19 L39 19 M8 1 L8 28 M30 1 L30 28" stroke="#555" stroke-width="1.3" fill="none"/></svg>
<svg style="left:1131px;top:47px" width="46" height="38"><rect x="1" y="1" width="40" height="27" fill="#fff" stroke="#555" stroke-width="1.6"/><rect x="14" y="10" width="27" height="18" fill="#5b9fe0"/><path d="M1 10 L41 10 M1 19 L41 19 M14 1 L14 28 M28 1 L28 28" stroke="#555" stroke-width="1.3" fill="none"/><path d="M22 29 L40 9 C42 7 44 9 42 11 L26 33" fill="#fff" stroke="#555" stroke-width="1.4"/><path d="M21 30 C17 31 15 34 13 36 C18 37 25 35 26 32 Z" fill="#5b9fe0" stroke="#3d85c8" stroke-width="1"/></svg>
<svg style="left:1203px;top:47px" width="46" height="38"><rect x="1" y="1" width="40" height="27" fill="#fff" stroke="#555" stroke-width="1.6"/><rect x="7" y="5" width="28" height="19" fill="#5b9fe0"/><path d="M1 5 L41 5 M7 1 L7 28 M35 1 L35 28 M1 24 L41 24" stroke="#555" stroke-width="1.2" fill="none"/><path d="M22 29 L40 9 C42 7 44 9 42 11 L26 33" fill="#fff" stroke="#555" stroke-width="1.4"/><path d="M21 30 C17 31 15 34 13 36 C18 37 25 35 26 32 Z" fill="#5b9fe0" stroke="#3d85c8" stroke-width="1"/></svg>
<div class="t" style="left:1018.0px;top:87.28px;font-size:15.5px;color:#555;letter-spacing:0.79px;">Conditional</div>
<div class="t" style="left:1012.5px;top:107.88px;font-size:15.5px;color:#555;letter-spacing:0.64px;">Formatting</div>
<svg style="left:1099px;top:115px" width="9" height="5.5"><path d="M1 1 L4.5 4.5 L8 1" stroke="#555" stroke-width="1.4" fill="none"/></svg>
<div class="t" style="left:1116.2px;top:87.28px;font-size:15.5px;color:#555;letter-spacing:0.26px;">Format as</div>
<div class="t" style="left:1125.8px;top:107.88px;font-size:15.5px;color:#555;letter-spacing:-0.10px;">Table</div>
<svg style="left:1168px;top:115px" width="9" height="5.5"><path d="M1 1 L4.5 4.5 L8 1" stroke="#555" stroke-width="1.4" fill="none"/></svg>
<div class="t" style="left:1209.5px;top:87.28px;font-size:15.5px;color:#555;letter-spacing:0.38px;">Cell</div>
<div class="t" style="left:1194.3px;top:107.88px;font-size:15.5px;color:#555;letter-spacing:0.01px;">Styles</div>
<svg style="left:1242px;top:115px" width="9" height="5.5"><path d="M1 1 L4.5 4.5 L8 1" stroke="#555" stroke-width="1.4" fill="none"/></svg>
<svg style="left:1282px;top:43px" width="24" height="19"><rect x="1" y="1" width="21" height="16" fill="#fff" stroke="#555" stroke-width="1.5"/><rect x="8" y="5" width="14" height="8" fill="#5b9fe0"/><path d="M1 5.5 L22 5.5 M1 12.5 L22 12.5 M8 1 L8 17 M15 1 L15 17" stroke="#555" stroke-width="1.1" fill="none"/><path d="M1 9 L8 9 M4 6 L1 9 L4 12" stroke="#2b9ad6" stroke-width="1.5" fill="none"/></svg>
<div class="t" style="left:1309.5px;top:45.48px;font-size:15.5px;color:#555;letter-spacing:0.33px;">Insert</div>
<svg style="left:1365px;top:50px" width="9" height="5.5"><path d="M1 1 L4.5 4.5 L8 1" stroke="#555" stroke-width="1.4" fill="none"/></svg>
<svg style="left:1282px;top:72px" width="24" height="19"><rect x="1" y="1" width="21" height="16" fill="#fff" stroke="#555" stroke-width="1.5"/><rect x="6" y="5" width="9" height="8" fill="#5b9fe0"/><path d="M1 5.5 L22 5.5 M1 12.5 L22 12.5 M8 1 L8 17 M15 1 L15 17" stroke="#555" stroke-width="1.1" fill="none"/><path d="M16 6 L21 12 M21 6 L16 12" stroke="#d8405a" stroke-width="1.5"/></svg>
<div class="t" style="left:1309.5px;top:74.18px;font-size:15.5px;color:#555;letter-spacing:0.63px;">Delete</div>
<svg style="left:1373px;top:79px" width="9" height="5.5"><path d="M1 1 L4.5 4.5 L8 1" stroke="#555" stroke-width="1.4" fill="none"/></svg>
<svg style="left:1282px;top:100px" width="24" height="20"><rect x="1" y="2" width="21" height="16" fill="#fff" stroke="#555" stroke-width="1.5"/><rect x="6" y="6" width="12" height="8" fill="#5b9fe0"/><path d="M1 6.5 L22 6.5 M1 13.5 L22 13.5 M6 2 L6 18 M17 2 L17 18" stroke="#555" stroke-width="1.1" fill="none"/><path d="M5 0.5 L18 0.5" stroke="#2b9ad6" stroke-width="1.2"/></svg>
<div class="t" style="left:1309.5px;top:103.38px;font-size:15.5px;color:#555;letter-spacing:0.44px;">Format</div>
<svg style="left:1367px;top:108px" width="9" height="5.5"><path d="M1 1 L4.5 4.5 L8 1" stroke="#555" stroke-width="1.4" fill="none"/></svg>
<svg style="left:1410px;top:38px" width="34" height="30"><path d="M25 5.5 L9.5 5.5 L17.5 14 L9.5 22.5 L25.5 22.5" stroke="#555" stroke-width="2" fill="none" stroke-linejoin="miter"/></svg>
<svg style="left:1447.5px;top:50px" width="9" height="5.5"><path d="M1 1 L4.5 4.5 L8 1" stroke="#555" stroke-width="1.4" fill="none"/></svg>
<svg style="left:1414px;top:71px" width="26" height="20"><rect x="1" y="1" width="22" height="17" fill="#fff" stroke="#555" stroke-width="1.6"/><path d="M1 4 L23 4" stroke="#555" stroke-width="2"/><path d="M12 7 L12 15 M8.5 11.5 L12 15 L15.5 11.5" stroke="#2b9ad6" stroke-width="1.6" fill="none"/></svg>
<svg style="left:1444px;top:79px" width="9" height="5.5"><path d="M1 1 L4.5 4.5 L8 1" stroke="#555" stroke-width="1.4" fill="none"/></svg>
<svg style="left:1414px;top:99px" width="24" height="21"><path d="M1.5 13 L13 2 L21 8 L10 19 Z" fill="#fff" stroke="#b040b8" stroke-width="1.5"/><path d="M1.5 13 L6.5 8 L14.5 14 L10 19 Z" fill="#c060c8" stroke="#b040b8" stroke-width="1.3"/></svg>
<svg style="left:1444px;top:107px" width="9" height="5.5"><path d="M1 1 L4.5 4.5 L8 1" stroke="#555" stroke-width="1.4" fill="none"/></svg>
<svg style="left:1470px;top:42px" width="48" height="40"><path d="M4.5 18 L10.5 3.5 L16.5 18 M6.8 12.5 L14.2 12.5" stroke="#3a9ad6" stroke-width="1.7" fill="none"/><path d="M4.5 21.5 L16 21.5 L4.5 35 L16.5 35" stroke="#555" stroke-width="1.7" fill="none"/><path d="M21.5 11.5 L43 11.5 L35 20.5 L35 30.5 L29.5 30.5 L29.5 20.5 Z" fill="#fafafa" stroke="#555" stroke-width="1.6" stroke-linejoin="round"/></svg>
<svg style="left:1532px;top:40px" width="48" height="44"><circle cx="30" cy="17" r="13.8" fill="#f8f8f8" stroke="#555" stroke-width="1.7"/><path d="M19.5 26.5 L4.5 40.5" stroke="#555" stroke-width="1.7"/></svg>
<div class="t" style="left:1470.1px;top:87.28px;font-size:15.5px;color:#555;letter-spacing:1.02px;">Sort &amp;</div>
<div class="t" style="left:1467.6px;top:107.88px;font-size:15.5px;color:#555;letter-spacing:0.42px;">Filter</div>
<svg style="left:1509px;top:115px" width="9" height="5.5"><path d="M1 1 L4.5 4.5 L8 1" stroke="#555" stroke-width="1.4" fill="none"/></svg>
<div class="t" style="left:1532.5px;top:87.28px;font-size:15.5px;color:#555;letter-spacing:0.83px;">Find &amp;</div>
<div class="t" style="left:1526.6px;top:107.88px;font-size:15.5px;color:#555;letter-spacing:0.16px;">Select</div>
<svg style="left:1576px;top:115px" width="9" height="5.5"><path d="M1 1 L4.5 4.5 L8 1" stroke="#555" stroke-width="1.4" fill="none"/></svg>
<svg style="left:1626px;top:43px" width="34" height="40"><path d="M14 1 L32 1 L23 15 L33 15 L10 37 L15 23 L2 23 Z" fill="#5ea5e4" stroke="#2e7bc4" stroke-width="1.5" stroke-linejoin="round"/></svg>
<div class="t" style="left:1622.7px;top:87.28px;font-size:15.5px;color:#555;letter-spacing:-0.03px;">Ideas</div>
<svg style="left:1730px;top:142px" width="16" height="10"><path d="M1 8 L7.5 2 L14 8" stroke="#555" stroke-width="1.5" fill="none"/></svg>
<div class="a" style="left:1004px;top:196px;width:750px;height:420px;background:#fff;border:2px solid #7f9e8b;border-bottom-width:3px"></div>
<div class="a" style="left:1023px;top:214px;width:712px;height:385px;border:1px solid #ebebeb"></div>
<div class="t" style="left:1161.9px;top:232.82px;font-size:21px;color:#606060;letter-spacing:1.63px;">Sum of Sale Price by Segment and Year</div>
<svg style="left:1687px;top:222px" width="39" height="35"><rect x="0.75" y="0.75" width="37" height="33.5" fill="#fff" stroke="#b0b0b0" stroke-width="1.5"/><rect x="4" y="4" width="3.5" height="5" fill="#b0b0b0"/><rect x="9" y="4" width="25.5" height="5" fill="#b0b0b0"/><rect x="4" y="11" width="5" height="20" fill="#b0b0b0"/><path d="M13 29 C21 30 28 26 29 14" stroke="#3f7fc0" stroke-width="2.4" fill="none"/><path d="M25 17 L29.5 11 L34 17" stroke="#3f7fc0" stroke-width="2.2" fill="none"/><path d="M16.5 25 L12 29 L16.5 33" stroke="#3f7fc0" stroke-width="2.2" fill="none"/></svg>
<div class="a" style="left:1176.1px;top:280px;width:1px;height:276px;background:#d9d9d9"></div>
<div class="t" style="left:1172.7px;top:571.35px;font-size:14px;color:#666;letter-spacing:0.00px;">0</div>
<div class="a" style="left:1248.5px;top:280px;width:1px;height:276px;background:#d9d9d9"></div>
<div class="t" style="left:1232.4px;top:571.35px;font-size:14px;color:#666;letter-spacing:0.62px;">5000</div>
<div class="a" style="left:1320.9px;top:280px;width:1px;height:276px;background:#d9d9d9"></div>
<div class="t" style="left:1300.7px;top:571.35px;font-size:14px;color:#666;letter-spacing:0.59px;">10000</div>
<div class="a" style="left:1393.3px;top:280px;width:1px;height:276px;background:#d9d9d9"></div>
<div class="t" style="left:1373.1px;top:571.35px;font-size:14px;color:#666;letter-spacing:0.59px;">15000</div>
<div class="a" style="left:1465.7px;top:280px;width:1px;height:276px;background:#d9d9d9"></div>
<div class="t" style="left:1445.5px;top:571.35px;font-size:14px;color:#666;letter-spacing:0.59px;">20000</div>
<div class="a" style="left:1538.1px;top:280px;width:1px;height:276px;background:#d9d9d9"></div>
<div class="t" style="left:1517.9px;top:571.35px;font-size:14px;color:#666;letter-spacing:0.59px;">25000</div>
<div class="a" style="left:1610.5px;top:280px;width:1px;height:276px;background:#d9d9d9"></div>
<div class="t" style="left:1590.3px;top:571.35px;font-size:14px;color:#666;letter-spacing:0.59px;">30000</div>
<div class="a" style="left:1176.6px;top:293.2px;width:325.7px;height:14px;background:#e2783a"></div>
<div class="a" style="left:1176.6px;top:307.2px;width:108.2px;height:14px;background:#5d9dd3"></div>
<div class="t" style="left:1054.0px;top:300.0px;font-size:15px;color:#666;letter-spacing:0.27px;">Small Business</div>
<div class="a" style="left:1176.6px;top:348.3px;width:15.9px;height:14px;background:#e2783a"></div>
<div class="a" style="left:1176.6px;top:362.3px;width:5.7px;height:14px;background:#5d9dd3"></div>
<div class="t" style="left:1079.4px;top:355.3px;font-size:15px;color:#666;letter-spacing:1.32px;">Midmarket</div>
<div class="a" style="left:1176.6px;top:403.5px;width:409.1px;height:14px;background:#e2783a"></div>
<div class="a" style="left:1176.6px;top:417.5px;width:136.3px;height:14px;background:#5d9dd3"></div>
<div class="t" style="left:1068.4px;top:410.3px;font-size:15px;color:#666;letter-spacing:0.98px;">Government</div>
<div class="a" style="left:1176.6px;top:458.6px;width:135.3px;height:14px;background:#e2783a"></div>
<div class="a" style="left:1176.6px;top:472.6px;width:44.7px;height:14px;background:#5d9dd3"></div>
<div class="t" style="left:1086.0px;top:466.5px;font-size:15px;color:#666;letter-spacing:0.64px;">Enterprise</div>
<div class="a" style="left:1176.6px;top:513.8px;width:12.8px;height:14px;background:#e2783a"></div>
<div class="a" style="left:1176.6px;top:527.8px;width:3.8px;height:14px;background:#5d9dd3"></div>
<div class="t" style="left:1035.7px;top:521.5px;font-size:15px;color:#666;letter-spacing:0.50px;">Channel Partners</div>
<div class="a" style="left:1665px;top:410px;width:10px;height:9px;background:#e2783a"></div>
<div class="t" style="left:1680.0px;top:406.2px;font-size:15px;color:#666;letter-spacing:0.17px;">2014</div>
<div class="a" style="left:1665px;top:440px;width:10px;height:9px;background:#5d9dd3"></div>
<div class="t" style="left:1680.0px;top:436.3px;font-size:15px;color:#666;letter-spacing:0.17px;">2013</div>
<div class="a" style="left:1192.5px;top:620px;width:563.5px;height:197.5px;background:#fff;border:1px solid #d0d0d0;box-shadow:0 1px 3px rgba(0,0,0,0.22)"></div>
<div class="t" style="left:1208.9px;top:636.36px;font-size:16px;color:#4a4a4a;letter-spacing:0.39px;">Formatting</div>
<div class="t" style="left:1326.6px;top:636.36px;font-size:16px;color:#2b7a4f;letter-spacing:-0.11px;font-weight:bold;">Charts</div>
<div class="t" style="left:1412.2px;top:636.36px;font-size:16px;color:#4a4a4a;letter-spacing:0.31px;">Totals</div>
<div class="t" style="left:1492.2px;top:636.36px;font-size:16px;color:#4a4a4a;letter-spacing:0.01px;">Tables</div>
<div class="t" style="left:1576.2px;top:636.36px;font-size:16px;color:#4a4a4a;letter-spacing:0.04px;">Sparklines</div>
<div class="a" style="left:1209px;top:652px;width:8px;height:1px;background:#666"></div>
<div class="a" style="left:1327px;top:652px;width:11px;height:1px;background:#666"></div>
<div class="a" style="left:1425px;top:652px;width:9px;height:1px;background:#666"></div>
<div class="a" style="left:1492px;top:652px;width:9px;height:1px;background:#666"></div>
<div class="a" style="left:1576px;top:652px;width:10px;height:1px;background:#666"></div>
<div class="a" style="left:1308px;top:628px;width:1px;height:28px;background:#ececec"></div>
<div class="a" style="left:1391.5px;top:628px;width:1px;height:28px;background:#ececec"></div>
<div class="a" style="left:1472px;top:628px;width:1px;height:28px;background:#ececec"></div>
<div class="a" style="left:1554px;top:628px;width:1px;height:28px;background:#ececec"></div>
<div class="a" style="left:1326px;top:660.7px;width:52.4px;height:4px;background:#257a48"></div>
<div class="a" style="left:1456.7px;top:675px;width:82.7px;height:46px;background:#c6c6c6"></div>
<svg style="left:1227px;top:684px" width="44" height="38"><rect x="1.5" y="5" width="37" height="5.5" fill="#86c5f5" stroke="#3a7cbf" stroke-width="1.3"/><rect x="1.5" y="10.5" width="24" height="5" fill="#fff" stroke="#555" stroke-width="1.3"/><rect x="1.5" y="20" width="18.5" height="5" fill="#c8c8c8" stroke="#777" stroke-width="1.2"/><rect x="1.5" y="25" width="28.5" height="5.5" fill="#fff" stroke="#555" stroke-width="1.3"/><path d="M1.2 1 L1.2 35 L40 35" stroke="#555" stroke-width="1.6" fill="none"/></svg>
<svg style="left:1310.5px;top:684px" width="44" height="38"><rect x="1.5" y="5" width="37" height="5.5" fill="#86c5f5" stroke="#3a7cbf" stroke-width="1.3"/><rect x="1.5" y="10.5" width="24" height="5" fill="#fff" stroke="#555" stroke-width="1.3"/><rect x="1.5" y="20" width="18.5" height="5" fill="#c8c8c8" stroke="#777" stroke-width="1.2"/><rect x="1.5" y="25" width="28.5" height="5.5" fill="#fff" stroke="#555" stroke-width="1.3"/><path d="M1.2 1 L1.2 35 L40 35" stroke="#555" stroke-width="1.6" fill="none"/></svg>
<svg style="left:1394px;top:684px" width="44" height="38"><rect x="1.5" y="5" width="37" height="5.5" fill="#86c5f5" stroke="#3a7cbf" stroke-width="1.3"/><rect x="1.5" y="10.5" width="24" height="5" fill="#fff" stroke="#555" stroke-width="1.3"/><rect x="1.5" y="20" width="18.5" height="5" fill="#c8c8c8" stroke="#777" stroke-width="1.2"/><rect x="1.5" y="25" width="28.5" height="5.5" fill="#fff" stroke="#555" stroke-width="1.3"/><path d="M1.2 1 L1.2 35 L40 35" stroke="#555" stroke-width="1.6" fill="none"/></svg>
<svg style="left:1477.5px;top:684px" width="44" height="38"><rect x="1.5" y="5" width="37" height="5.5" fill="#86c5f5" stroke="#3a7cbf" stroke-width="1.3"/><rect x="1.5" y="10.5" width="37" height="5" fill="#fff" stroke="#555" stroke-width="1.3"/><rect x="1.5" y="15.5" width="37" height="10" fill="#c8c8c8" stroke="#777" stroke-width="1.2"/><rect x="1.5" y="25" width="37" height="5.5" fill="#fff" stroke="#555" stroke-width="1.3"/><path d="M1.2 1 L1.2 35 L40 35" stroke="#555" stroke-width="1.6" fill="none"/></svg>
<svg style="left:1561px;top:684px" width="44" height="38"><rect x="1.5" y="5" width="37.5" height="5.5" fill="#86c5f5" stroke="#3a7cbf" stroke-width="1.3"/><rect x="1.5" y="10.5" width="24" height="5" fill="#fff" stroke="#555" stroke-width="1.3"/><rect x="1.5" y="20" width="18.5" height="5" fill="#c8c8c8" stroke="#777" stroke-width="1.2"/><rect x="1.5" y="25" width="28" height="5.5" fill="#fff" stroke="#555" stroke-width="1.3"/><path d="M1.2 1 L1.2 35 L40 35" stroke="#555" stroke-width="1.6" fill="none"/></svg>
<svg style="left:1644px;top:683px" width="46" height="40"><rect x="1.5" y="2" width="11.5" height="34" fill="#c8c8c8" stroke="#777" stroke-width="1.4"/><rect x="13" y="14.5" width="10.5" height="21.5" fill="#fff" stroke="#777" stroke-width="1.4"/><path d="M28 8 C28 2 40 1 40 8 C40 13 34 13 34 18 L34 20" stroke="#4aa0d8" stroke-width="2" fill="none"/><circle cx="34" cy="23" r="1.2" fill="#4aa0d8"/></svg>
<div class="t" style="left:1211.8px;top:731.18px;font-size:15.5px;color:#555;letter-spacing:0.46px;">Clustered</div>
<div class="t" style="left:1235.8px;top:750.88px;font-size:15.5px;color:#555;letter-spacing:-0.55px;">Bar</div>
<div class="t" style="left:1295.4px;top:731.18px;font-size:15.5px;color:#555;letter-spacing:0.46px;">Clustered</div>
<div class="t" style="left:1319.4px;top:750.88px;font-size:15.5px;color:#555;letter-spacing:-0.55px;">Bar</div>
<div class="t" style="left:1378.4px;top:731.18px;font-size:15.5px;color:#555;letter-spacing:0.46px;">Clustered</div>
<div class="t" style="left:1403.0px;top:750.88px;font-size:15.5px;color:#555;letter-spacing:-0.55px;">Bar</div>
<div class="t" style="left:1204.6px;top:795.45px;font-size:14px;color:#555;letter-spacing:0.15px;">Recommended Charts help you</div>
<div class="t" style="left:1409.0px;top:795.45px;font-size:14px;color:#555;letter-spacing:1.38px;">quickly</div>
<div class="a" style="left:1412px;top:721px;width:342px;height:125px;background:#fff;border:1px solid #d0d0d0;box-shadow:0 1px 3px rgba(0,0,0,0.2)"></div>
<div class="t" style="left:1428.0px;top:730.83px;font-size:14.5px;color:#5a5a5a;letter-spacing:0.94px;">Use this chart type to:</div>
<div class="t" style="left:1429.0px;top:750.73px;font-size:14.5px;color:#5a5a5a;letter-spacing:0.00px;">•</div>
<div class="t" style="left:1439.5px;top:750.73px;font-size:14.5px;color:#5a5a5a;letter-spacing:0.83px;">Compare values across a few categories.</div>
<div class="t" style="left:1428.0px;top:790.73px;font-size:14.5px;color:#5a5a5a;letter-spacing:0.97px;">Use it when:</div>
<div class="t" style="left:1429.0px;top:810.73px;font-size:14.5px;color:#5a5a5a;letter-spacing:0.00px;">•</div>
<div class="t" style="left:1440.5px;top:810.73px;font-size:14.5px;color:#5a5a5a;letter-spacing:0.95px;">The chart shows duration.</div>
<div class="t" style="left:1429.0px;top:830.73px;font-size:14.5px;color:#5a5a5a;letter-spacing:0.00px;">•</div>
<div class="t" style="left:1440.5px;top:830.73px;font-size:14.5px;color:#5a5a5a;letter-spacing:1.26px;">The category text is long.</div>
<svg style="left:1498px;top:685px" width="42" height="52"><path d="M1.4 1.7 L1.4 42 L11.9 34.3 L18 47.5 L25 45.6 L20.4 32.3 L34.4 32 Z" fill="#fff" stroke="#2a2a2a" stroke-width="1.7" stroke-linejoin="miter"/></svg>
</body></html>
